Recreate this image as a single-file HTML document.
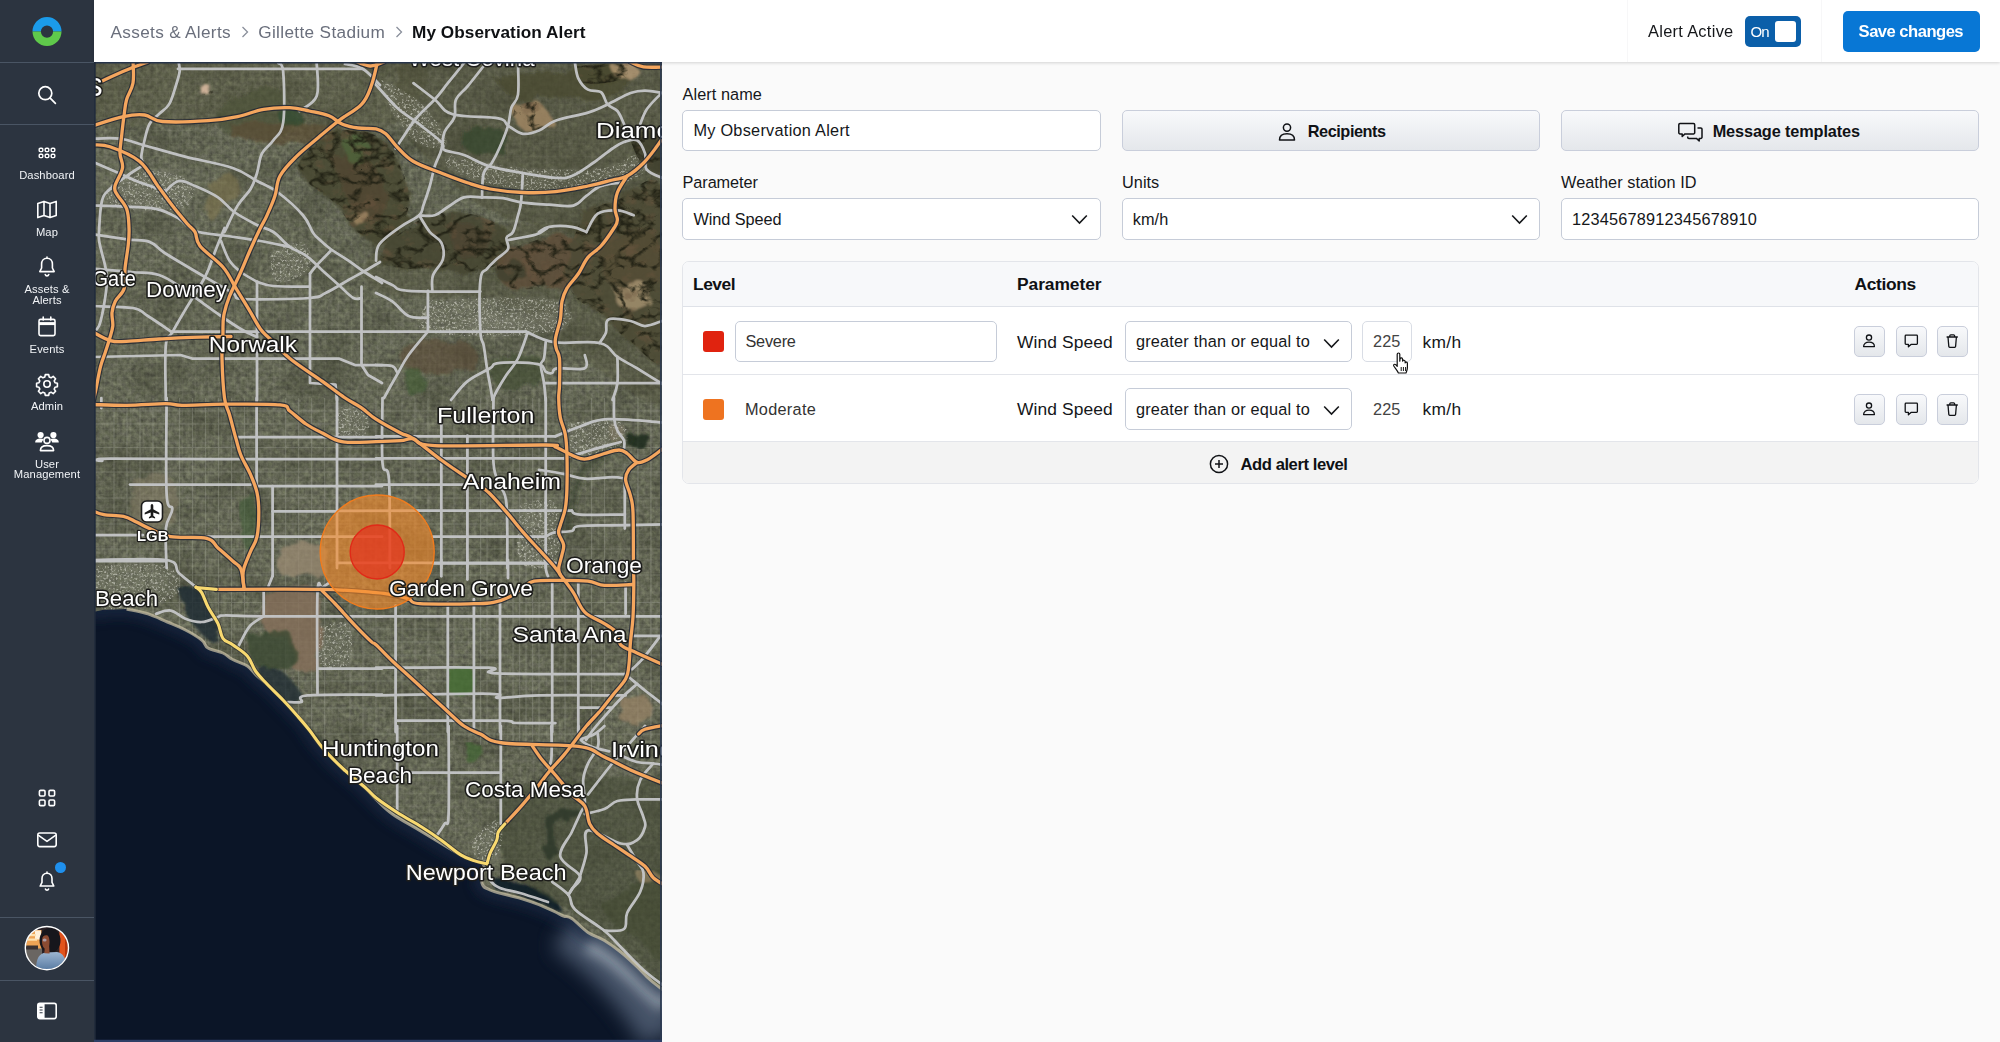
<!DOCTYPE html>
<html lang="en">
<head>
<meta charset="utf-8">
<title>My Observation Alert</title>
<style>
*{box-sizing:border-box;margin:0;padding:0}
html,body{width:2000px;height:1042px;overflow:hidden;background:#fafafa}
body{font-family:"Liberation Sans",Arial,sans-serif;color:#15171a;position:relative;-webkit-font-smoothing:antialiased}
.abs{position:absolute}
#sidebar{position:absolute;left:0;top:0;width:94px;height:1042px;background:#2c3440}
#sidebar .div{position:absolute;left:0;width:94px;height:1px;background:#4a5564}
#sidebar svg{position:absolute;overflow:visible}
.nl{position:absolute;left:0;width:94px;text-align:center;color:#f2f4f7;font-size:11.2px;line-height:11px;letter-spacing:.1px;white-space:nowrap}
#header{position:absolute;left:94px;top:0;width:1906px;height:62px;background:#fff;box-shadow:0 1px 3px rgba(0,0,0,.16)}
.bc{position:absolute;top:0;height:62px;line-height:65px;font-size:17.2px;white-space:nowrap;color:#6a6f7c}
.bc.cur{color:#0f1114;font-weight:700}
#panel{position:absolute;left:662px;top:63px;width:1338px;height:979px;background:#fafafa}
.lbl{position:absolute;font-size:16.3px;line-height:20px;white-space:nowrap;color:#15171a;letter-spacing:.1px}
.inp{position:absolute;background:#fff;border:1.3px solid #c6ccd8;border-radius:5px;font-size:16.3px;line-height:20px;white-space:nowrap;color:#15171a}
.inp span{position:absolute;left:10px;top:9.5px;letter-spacing:.15px}
.btn{position:absolute;border:1.3px solid #c9cedb;border-radius:5px;background:linear-gradient(#f8f9fb,#e4e7eb);font-weight:700;font-size:16.3px;white-space:nowrap;color:#101216}
.chev{position:absolute}
#tbl{position:absolute;left:682px;top:261px;width:1297px;height:223px;border:1.3px solid #e3e5ea;border-radius:7px;background:#fff;overflow:hidden}
#tbl .th{position:absolute;left:0;top:0;width:100%;height:45px;background:#f7f8fa;border-bottom:1.3px solid #dfe2e8}
#tbl .r1{position:absolute;left:0;top:45px;width:100%;height:67.5px;border-bottom:1.3px solid #e3e5ea}
#tbl .r2{position:absolute;left:0;top:112.5px;width:100%;height:67.5px;border-bottom:1.3px solid #e3e5ea}
#tbl .tf{position:absolute;left:0;top:180px;width:100%;height:43px;background:#f3f3f3}
.h{position:absolute;font-weight:700;font-size:17.4px;line-height:20px;white-space:nowrap;color:#0f1114}
.t{position:absolute;font-size:17.4px;line-height:20px;white-space:nowrap;color:#15171a;letter-spacing:.2px}
.sw{position:absolute;width:21px;height:21px;border-radius:3px}
.ib{position:absolute;width:31px;height:31px;border:1.3px solid #c9cedb;border-radius:5px;background:linear-gradient(#f8f9fb,#e4e7eb)}
.ib svg{position:absolute;left:0;top:0}
#map{position:absolute;left:94px;top:62px;width:568px;height:980px;overflow:hidden;background:#5a5d4c}
#map svg{display:block}
</style>
</head>
<body>
<div id="map">
<svg width="568" height="980" viewBox="94 62 568 980" font-family="'Liberation Sans',Arial,sans-serif">
<defs>
<filter id="land" x="0" y="0" width="100%" height="100%" color-interpolation-filters="sRGB"><feTurbulence type="fractalNoise" baseFrequency="0.22" numOctaves="3" seed="3"/><feColorMatrix type="matrix" values="0.24 0.06 0 0 0.235  0.24 0.08 0 0 0.237  0.21 0.02 0 0 0.212  0 0 0 0 1"/></filter>
<filter id="lowvar" x="0" y="0" width="100%" height="100%" color-interpolation-filters="sRGB"><feTurbulence type="fractalNoise" baseFrequency="0.02 0.025" numOctaves="3" seed="11"/><feColorMatrix type="matrix" values="0 0 0 0 0.18  0 0 0 0 0.19  0 0 0 0 0.13  0.9 0 0 0 -0.42"/></filter>
<filter id="bright" x="0" y="0" width="100%" height="100%" color-interpolation-filters="sRGB"><feTurbulence type="fractalNoise" baseFrequency="0.05 0.06" numOctaves="4" seed="23"/><feColorMatrix type="matrix" values="0 0 0 0 0.74  0 0 0 0 0.74  0 0 0 0 0.68  0 2.4 0 0 -1.42"/></filter>
<filter id="ridges" x="0" y="0" width="100%" height="100%" color-interpolation-filters="sRGB"><feTurbulence type="turbulence" baseFrequency="0.045 0.06" numOctaves="3" seed="8"/><feColorMatrix type="matrix" values="0 0 0 0 0.13  0 0 0 0 0.13  0 0 0 0 0.08  -4.5 0 0 0 1.25"/></filter>
<filter id="ridges2" x="0" y="0" width="100%" height="100%" color-interpolation-filters="sRGB"><feTurbulence type="turbulence" baseFrequency="0.05 0.07" numOctaves="3" seed="19"/><feColorMatrix type="matrix" values="0 0 0 0 0.43  0 0 0 0 0.34  0 0 0 0 0.25  0 3.0 0 0 -1.05"/></filter>
<filter id="speck" x="0" y="0" width="100%" height="100%" color-interpolation-filters="sRGB"><feTurbulence type="fractalNoise" baseFrequency="0.45" numOctaves="2" seed="31"/><feColorMatrix type="matrix" values="0 0 0 0 0.86  0 0 0 0 0.86  0 0 0 0 0.82  0 0 4.0 0 -2.05"/></filter>
<filter id="b3" x="-20%" y="-20%" width="140%" height="140%"><feGaussianBlur stdDeviation="3"/></filter>
<filter id="b6" x="-30%" y="-30%" width="160%" height="160%"><feGaussianBlur stdDeviation="6"/></filter>
<filter id="b10" x="-30%" y="-30%" width="160%" height="160%"><feGaussianBlur stdDeviation="10"/></filter>
<filter id="rough" x="-10%" y="-10%" width="120%" height="120%"><feTurbulence type="fractalNoise" baseFrequency="0.06" numOctaves="3" seed="2" result="t"/><feDisplacementMap in="SourceGraphic" in2="t" scale="14"/><feGaussianBlur stdDeviation="1.2"/></filter>
<pattern id="streets" width="6.5" height="6.5" patternUnits="userSpaceOnUse"><path d="M0 .5 H6.5 M.5 0 V6.5" stroke="#c8c8b8" stroke-width=".6" opacity=".10"/></pattern>
<clipPath id="landclip"><path d="M90 58 L668 58 L668 1000 L668.0 994.0 L650.0 979.7 L637.0 966.6 L620.7 952.0 L604.4 940.5 L588.0 932.4 L571.8 918.5 L563.6 916.0 L555.4 912.0 L539.0 904.6 L522.8 899.0 L506.5 894.8 L490.0 890.0 L482.0 883.4 L484.0 866.0 L477.0 861.4 L460.8 854.9 L441.3 843.5 L416.8 828.8 L392.3 814.0 L376.0 799.4 L363.0 786.0 L340.0 766.0 L320.0 745.0 L306.0 724.8 L294.6 711.7 L283.2 700.0 L270.2 687.0 L257.0 675.8 L247.3 666.0 L232.7 659.5 L222.9 653.0 L208.0 648.0 L201.7 640.0 L185.4 630.0 L167.4 622.0 L147.8 613.8 L126.6 609.0 L103.8 609.8 L90.0 612.5 Z"/></clipPath>
</defs>
<rect x="94" y="62" width="568" height="980" fill="#0b1527"/>
<path d="M566 930 L590 948 L612 968 L632 990 L650 1014 L662 1036" fill="none" stroke="#56657a" stroke-width="44" opacity=".8" filter="url(#b10)"/>
<path d="M590 940 L606 948 L622 960 L640 976 L652 988 L668 1002" fill="none" stroke="#a3adb8" stroke-width="24" opacity=".85" filter="url(#b6)"/>
<path d="M90.0 612.5 C92.5 612.0 97.2 610.4 103.8 609.8 C110.4 609.2 118.7 608.3 126.6 609.0 C134.5 609.7 140.5 611.5 147.8 613.8 C155.1 616.1 160.6 619.1 167.4 622.0 C174.2 624.9 179.2 626.8 185.4 630.0 C191.6 633.2 197.6 636.8 201.7 640.0 C205.8 643.2 204.2 645.7 208.0 648.0 C211.8 650.3 218.5 650.9 222.9 653.0 C227.3 655.1 228.3 657.2 232.7 659.5 C237.1 661.8 242.9 663.1 247.3 666.0 C251.7 668.9 252.9 672.0 257.0 675.8 C261.1 679.6 265.5 682.6 270.2 687.0 C274.9 691.4 278.8 695.6 283.2 700.0 C287.6 704.4 290.5 707.2 294.6 711.7 C298.7 716.2 301.4 718.8 306.0 724.8 C310.6 730.8 313.9 737.6 320.0 745.0 C326.1 752.4 332.3 758.6 340.0 766.0 C347.7 773.4 356.5 780.0 363.0 786.0 C369.5 792.0 370.7 794.4 376.0 799.4 C381.3 804.4 385.0 808.7 392.3 814.0 C399.6 819.3 408.0 823.5 416.8 828.8 C425.6 834.1 433.4 838.8 441.3 843.5 C449.2 848.2 454.4 851.7 460.8 854.9 C467.2 858.1 472.8 859.4 477.0 861.4 C481.2 863.4 483.1 862.0 484.0 866.0 C484.9 870.0 480.9 879.1 482.0 883.4 C483.1 887.7 485.6 887.9 490.0 890.0 C494.4 892.1 500.6 893.2 506.5 894.8 C512.4 896.4 516.9 897.2 522.8 899.0 C528.6 900.8 533.1 902.3 539.0 904.6 C544.9 906.9 551.0 909.9 555.4 912.0 C559.8 914.1 560.6 914.8 563.6 916.0 C566.6 917.2 567.4 915.5 571.8 918.5 C576.2 921.5 582.1 928.4 588.0 932.4 C593.9 936.4 598.5 937.0 604.4 940.5 C610.3 944.0 614.8 947.3 620.7 952.0 C626.6 956.7 631.7 961.6 637.0 966.6 C642.3 971.6 644.4 974.8 650.0 979.7 C655.6 984.6 664.8 991.4 668.0 994.0" fill="none" stroke="#1a2b45" stroke-width="16" opacity=".7" filter="url(#b6)"/>
<g clip-path="url(#landclip)">
<rect x="94" y="62" width="568" height="980" filter="url(#land)"/>
<rect x="94" y="62" width="568" height="980" fill="url(#streets)"/>
<rect x="94" y="62" width="568" height="980" filter="url(#lowvar)"/>
<rect x="94" y="62" width="568" height="980" filter="url(#bright)" opacity=".10"/>
<g fill="none" stroke="#a9aba0" stroke-width="1.1" stroke-linejoin="round" opacity=".30">
<path d="M94.0 411.0 L662.0 411.0"/>
<path d="M94.0 424.0 L662.0 424.0"/>
<path d="M94.0 447.5 L662.0 447.5"/>
<path d="M94.0 472.0 L662.0 472.0"/>
<path d="M94.0 498.0 L662.0 498.0"/>
<path d="M94.0 524.0 L662.0 524.0"/>
<path d="M94.0 549.0 L662.0 549.0"/>
<path d="M94.0 575.0 L662.0 575.0"/>
<path d="M94.0 602.5 L662.0 602.5"/>
<path d="M94.0 629.0 L662.0 629.0"/>
<path d="M94.0 642.0 L662.0 642.0"/>
<path d="M94.0 655.0 L662.0 655.0"/>
<path d="M94.0 681.0 L662.0 681.0"/>
<path d="M94.0 708.0 L662.0 708.0"/>
<path d="M94.0 734.0 L662.0 734.0"/>
<path d="M114.0 398.0 L114.0 745.0"/>
<path d="M127.0 398.0 L127.0 745.0"/>
<path d="M140.0 398.0 L140.0 745.0"/>
<path d="M153.0 398.0 L153.0 745.0"/>
<path d="M179.5 398.0 L179.5 745.0"/>
<path d="M192.5 398.0 L192.5 745.0"/>
<path d="M205.5 398.0 L205.5 745.0"/>
<path d="M218.5 398.0 L218.5 745.0"/>
<path d="M231.5 398.0 L231.5 745.0"/>
<path d="M244.5 398.0 L244.5 745.0"/>
<path d="M285.5 398.0 L285.5 745.0"/>
<path d="M298.5 398.0 L298.5 745.0"/>
<path d="M311.5 398.0 L311.5 745.0"/>
<path d="M324.5 398.0 L324.5 745.0"/>
<path d="M350.0 398.0 L350.0 745.0"/>
<path d="M363.0 398.0 L363.0 745.0"/>
<path d="M376.0 398.0 L376.0 745.0"/>
<path d="M402.0 398.0 L402.0 745.0"/>
<path d="M415.0 398.0 L415.0 745.0"/>
<path d="M428.0 398.0 L428.0 745.0"/>
<path d="M454.0 398.0 L454.0 745.0"/>
<path d="M480.5 398.0 L480.5 745.0"/>
<path d="M487.0 398.0 L487.0 745.0"/>
<path d="M513.0 398.0 L513.0 745.0"/>
<path d="M519.5 398.0 L519.5 745.0"/>
<path d="M526.0 398.0 L526.0 745.0"/>
<path d="M532.5 398.0 L532.5 745.0"/>
<path d="M539.0 398.0 L539.0 745.0"/>
<path d="M565.0 398.0 L565.0 745.0"/>
<path d="M591.5 398.0 L591.5 745.0"/>
<path d="M604.5 398.0 L604.5 745.0"/>
<path d="M638.0 398.0 L638.0 745.0"/>
<path d="M651.0 398.0 L651.0 745.0"/>
</g>
<path d="M400.0 55.0 C448.6 55.0 621.4 21.7 670.0 55.0 C718.6 88.3 682.6 207.6 670.0 240.0 C657.4 272.4 630.6 239.5 600.0 235.0 C569.4 230.5 528.8 226.7 500.0 215.0 C471.2 203.3 458.0 187.1 440.0 170.0 C422.0 152.9 407.2 140.7 400.0 120.0 C392.8 99.3 400.0 66.7 400.0 55.0 Z" fill="#4a4830" opacity="0.38" filter="url(#rough)"/>
<path d="M90.0 55.0 C145.8 55.0 344.2 43.3 400.0 55.0 C455.8 66.7 412.6 105.6 400.0 120.0 C387.4 134.4 366.0 134.1 330.0 135.0 C294.0 135.9 243.2 127.7 200.0 125.0 C156.8 122.3 109.8 132.6 90.0 120.0 C70.2 107.4 90.0 66.7 90.0 55.0 Z" fill="#4f5034" opacity="0.28" filter="url(#rough)"/>
<path d="M376.0 228.0 C401.9 227.5 467.4 222.8 520.0 225.0 C572.6 227.2 641.4 208.5 668.0 240.0 C694.6 271.5 687.4 382.0 668.0 400.0 C648.6 418.0 590.2 358.0 560.0 340.0 C529.8 322.0 533.1 309.0 500.0 300.0 C466.9 291.0 398.3 303.0 376.0 290.0 C353.7 277.0 376.0 239.2 376.0 228.0 Z" fill="#4a4830" opacity="0.3" filter="url(#rough)"/>
<path d="M113.6 177.5 C121.8 176.3 145.2 169.8 159.3 170.9 C173.3 172.1 187.2 177.5 191.9 184.0 C196.6 190.4 195.9 202.1 185.4 206.8 C174.8 211.5 147.2 211.3 133.2 210.1 C119.1 208.9 110.6 206.2 107.1 200.3 C103.5 194.4 112.4 181.6 113.6 177.5 Z" fill="#7c7d6e" opacity="0.35" filter="url(#rough)"/>
<path d="M381.1 79.6 C388.2 83.7 408.5 91.3 420.3 102.4 C432.0 113.6 446.4 133.9 446.4 141.6 C446.4 149.2 429.7 149.5 420.3 144.8 C410.9 140.1 401.2 127.2 394.2 115.5 C387.1 103.7 383.5 86.0 381.1 79.6 Z" fill="#7c7d6e" opacity="0.3" filter="url(#rough)"/>
<path d="M446.4 154.6 C459.3 157.0 490.0 165.3 518.1 167.7 C546.3 170.0 580.7 170.6 603.0 167.7 C625.3 164.7 634.5 150.8 642.1 151.4 C649.8 151.9 652.4 164.5 645.4 170.9 C638.3 177.4 625.9 184.0 603.0 187.2 C580.1 190.5 545.2 191.8 518.1 188.9 C491.1 185.9 465.8 177.1 452.9 170.9 C440.0 164.8 447.5 157.6 446.4 154.6 Z" fill="#7c7d6e" opacity="0.3" filter="url(#rough)"/>
<path d="M270.2 252.5 C276.1 250.7 295.8 239.8 302.8 242.7 C309.9 245.6 314.0 261.8 309.3 268.8 C304.6 275.9 283.8 284.8 276.7 281.9 C269.7 278.9 271.4 257.8 270.2 252.5 Z" fill="#7c7d6e" opacity="0.3" filter="url(#rough)"/>
<path d="M472.5 314.5 C486.6 314.5 536.7 311.5 550.8 314.5 C564.9 317.4 564.9 327.9 550.8 330.8 C536.7 333.7 486.6 333.7 472.5 330.8 C458.4 327.9 472.5 317.4 472.5 314.5 Z" fill="#7c7d6e" opacity="0.3" filter="url(#rough)"/>
<path d="M280.0 547.0 C287.6 546.6 314.3 541.2 322.0 545.0 C329.7 548.8 324.8 562.4 323.0 568.0 C321.2 573.6 319.6 574.9 312.0 576.0 C304.4 577.1 286.8 579.2 281.0 574.0 C275.2 568.8 280.2 551.9 280.0 547.0 Z" fill="#9a8a72" opacity="0.75" filter="url(#rough)"/>
<path d="M265.0 593.0 C274.2 593.0 306.6 579.7 316.0 593.0 C325.4 606.3 321.3 653.5 317.0 667.0 C312.7 680.5 296.9 672.9 292.0 668.0 C287.1 663.1 294.7 646.8 290.0 640.0 C285.3 633.2 270.5 638.5 266.0 630.0 C261.5 621.5 265.2 599.7 265.0 593.0 Z" fill="#86705a" opacity="0.8" filter="url(#rough)"/>
<path d="M249.0 634.0 C256.4 633.8 282.3 627.6 290.0 633.0 C297.7 638.4 297.0 657.7 292.0 664.0 C287.0 670.3 269.6 669.6 262.0 668.0 C254.4 666.4 252.3 661.1 250.0 655.0 C247.7 648.9 249.2 637.8 249.0 634.0 Z" fill="#3a4a32" opacity="0.8" filter="url(#rough)"/>
<path d="M449.4 669.3 C453.5 669.3 468.1 665.2 472.2 669.3 C476.3 673.4 476.3 687.9 472.2 692.0 C468.1 696.1 453.5 696.1 449.4 692.0 C445.3 687.9 449.4 673.4 449.4 669.3 Z" fill="#466e36" opacity="0.85" filter="url(#rough)"/>
<path d="M620.7 698.0 C625.4 697.8 641.9 692.8 646.8 697.0 C651.7 701.2 652.5 717.0 648.0 721.5 C643.5 726.0 626.9 726.2 622.0 722.0 C617.1 717.8 620.9 702.3 620.7 698.0 Z" fill="#9a8466" opacity="0.7" filter="url(#rough)"/>
<path d="M241.0 496.0 C243.7 496.0 252.9 487.2 256.0 496.0 C259.1 504.8 260.3 536.2 258.0 545.0 C255.7 553.8 246.1 553.8 243.0 545.0 C239.9 536.2 241.4 504.8 241.0 496.0 Z" fill="#3e5a34" opacity="0.55" filter="url(#rough)"/>
<path d="M133.0 478.0 C139.7 478.0 163.0 470.4 170.0 478.0 C177.0 485.6 178.3 512.1 172.0 520.0 C165.7 527.9 142.0 529.6 135.0 522.0 C128.0 514.4 133.4 485.9 133.0 478.0 Z" fill="#8a8068" opacity="0.45" filter="url(#rough)"/>
<path d="M467.4 745.6 C469.7 745.6 478.1 742.6 480.4 745.6 C482.7 748.6 482.7 759.0 480.4 762.0 C478.1 765.0 469.7 765.0 467.4 762.0 C465.1 759.0 467.4 748.6 467.4 745.6 Z" fill="#3f6a30" opacity="0.6" filter="url(#rough)"/>
<path d="M626.0 436.0 C628.5 435.3 635.3 431.3 640.0 432.0 C644.7 432.7 652.0 437.3 652.0 440.0 C652.0 442.7 644.3 446.1 640.0 447.0 C635.7 447.9 630.5 447.0 628.0 445.0 C625.5 443.0 626.4 437.6 626.0 436.0 Z" fill="#1e2a1c" opacity="0.85" filter="url(#rough)"/>
<path d="M610.0 425.0 C612.2 424.8 619.8 421.3 622.0 424.0 C624.2 426.7 624.0 436.9 622.0 440.0 C620.0 443.1 613.2 443.7 611.0 441.0 C608.8 438.3 610.2 427.9 610.0 425.0 Z" fill="#8b7d63" opacity="0.5" filter="url(#rough)"/>
<path d="M178.8 589.0 C182.6 589.5 194.4 588.2 200.0 592.0 C205.6 595.8 206.8 603.2 210.0 610.0 C213.2 616.8 217.3 624.6 218.0 630.0 C218.7 635.4 217.2 639.6 214.0 640.0 C210.8 640.4 205.0 637.0 200.0 632.0 C195.0 627.0 189.8 619.7 186.0 612.0 C182.2 604.3 180.1 593.1 178.8 589.0 Z" fill="#1b2a33" opacity="0.8" filter="url(#rough)"/>
<path d="M257.0 668.0 C261.1 668.4 272.6 666.0 280.0 670.0 C287.4 674.0 294.8 684.1 298.0 690.0 C301.2 695.9 301.2 701.2 298.0 703.0 C294.8 704.8 286.5 703.4 280.0 700.0 C273.5 696.6 266.1 689.8 262.0 684.0 C257.9 678.2 257.9 670.9 257.0 668.0 Z" fill="#1d2c30" opacity="0.75" filter="url(#rough)"/>
<path d="M545.7 815.7 C547.6 815.0 550.2 813.2 556.0 812.0 C561.8 810.8 574.0 808.1 578.0 809.0 C582.0 809.9 581.6 814.7 578.0 817.0 C574.4 819.3 562.1 817.9 558.0 822.0 C553.9 826.1 556.5 833.8 555.4 840.0 C554.3 846.2 553.9 853.6 552.0 856.5 C550.1 859.4 545.7 859.7 545.0 856.0 C544.3 852.3 547.9 843.3 548.0 836.0 C548.1 828.7 546.1 819.4 545.7 815.7 Z" fill="#1c2a22" opacity="0.85" filter="url(#rough)"/>
<path d="M490.0 876.0 C492.9 876.7 499.9 878.4 506.0 880.0 C512.1 881.6 516.4 882.3 524.0 885.0 C531.6 887.7 541.5 891.2 548.0 895.0 C554.5 898.8 557.3 902.6 560.0 906.0 C562.7 909.4 565.7 914.2 563.0 914.0 C560.3 913.8 552.7 908.2 545.0 905.0 C537.3 901.8 528.8 898.9 520.0 896.0 C511.2 893.1 501.4 892.6 496.0 889.0 C490.6 885.4 491.1 878.3 490.0 876.0 Z" fill="#101c28" opacity="0.9" filter="url(#rough)"/>
<path d="M310.0 728.0 C313.6 731.6 324.6 741.9 330.0 748.0 C335.4 754.1 339.6 759.1 340.0 762.0 C340.4 764.9 336.0 766.5 332.0 764.0 C328.0 761.5 322.0 754.5 318.0 748.0 C314.0 741.5 311.4 731.6 310.0 728.0 Z" fill="#2a3326" opacity="0.6" filter="url(#rough)"/>
<path d="M600.0 905.0 C607.2 900.5 628.5 885.9 640.0 880.0 C651.5 874.1 659.7 857.6 664.0 872.0 C668.3 886.4 668.3 947.8 664.0 960.0 C659.7 972.2 648.8 946.3 640.0 940.0 C631.2 933.7 622.2 931.3 615.0 925.0 C607.8 918.7 602.7 908.6 600.0 905.0 Z" fill="#3f4a2c" opacity="0.5" filter="url(#rough)"/>
<path d="M500.0 800.0 C510.8 796.4 534.8 783.6 560.0 780.0 C585.2 776.4 620.6 778.2 640.0 780.0 C659.4 781.8 663.0 752.2 668.0 790.0 C673.0 827.8 673.0 959.4 668.0 990.0 C663.0 1020.6 652.2 970.8 640.0 960.0 C627.8 949.2 614.4 939.9 600.0 930.0 C585.6 920.1 574.4 914.0 560.0 905.0 C545.6 896.0 530.8 889.9 520.0 880.0 C509.2 870.1 503.6 864.4 500.0 850.0 C496.4 835.6 500.0 809.0 500.0 800.0 Z" fill="#3f4630" opacity="0.5" filter="url(#rough)"/>
<path d="M636.0 872.0 C639.6 872.0 651.7 870.6 656.0 872.0 C660.3 873.4 662.9 878.2 660.0 880.0 C657.1 881.8 644.3 883.4 640.0 882.0 C635.7 880.6 636.7 873.8 636.0 872.0 Z" fill="#a08a66" opacity="0.6" filter="url(#rough)"/>
<path d="M337.0 408.0 C342.0 408.0 359.8 403.3 365.0 408.0 C370.2 412.7 370.9 429.3 366.0 434.0 C361.1 438.7 343.2 438.7 338.0 434.0 C332.8 429.3 337.2 412.7 337.0 408.0 Z" fill="#7c7d6e" opacity="0.3" filter="url(#rough)"/>
<path d="M568.5 422.5 C577.9 422.5 611.3 417.2 620.7 422.5 C630.1 427.8 630.1 446.5 620.7 451.8 C611.3 457.1 577.9 457.1 568.5 451.8 C559.1 446.5 568.5 427.8 568.5 422.5 Z" fill="#7c7d6e" opacity="0.3" filter="url(#rough)"/>
<path d="M519.6 504.0 C526.0 504.0 549.0 493.7 555.4 504.0 C561.8 514.3 561.8 550.7 555.4 561.0 C549.0 571.3 526.0 571.3 519.6 561.0 C513.2 550.7 519.6 514.3 519.6 504.0 Z" fill="#7c7d6e" opacity="0.3" filter="url(#rough)"/>
<path d="M320.8 625.0 C325.8 625.0 343.5 618.0 348.5 625.0 C353.5 632.0 353.5 657.0 348.5 664.0 C343.5 671.0 325.8 671.0 320.8 664.0 C315.8 657.0 320.8 632.0 320.8 625.0 Z" fill="#7c7d6e" opacity="0.3" filter="url(#rough)"/>
<path d="M428.0 300.0 C450.9 300.0 532.1 294.2 555.0 300.0 C577.9 305.8 577.9 326.2 555.0 332.0 C532.1 337.8 450.9 337.8 428.0 332.0 C405.1 326.2 428.0 305.8 428.0 300.0 Z" fill="#7c7d6e" opacity="0.3" filter="url(#rough)"/>
<path d="M470.0 840.0 C475.0 836.4 492.6 818.2 498.0 820.0 C503.4 821.8 503.2 842.4 500.0 850.0 C496.8 857.6 485.4 863.8 480.0 862.0 C474.6 860.2 471.8 844.0 470.0 840.0 Z" fill="#7c7d6e" opacity="0.3" filter="url(#rough)"/>
<path d="M96.0 566.0 C108.4 566.0 149.9 561.7 165.0 566.0 C180.1 570.3 182.7 582.8 180.0 590.0 C177.3 597.2 165.1 603.1 150.0 606.0 C134.9 608.9 105.7 613.2 96.0 606.0 C86.3 598.8 96.0 573.2 96.0 566.0 Z" fill="#7c7d6e" opacity="0.3" filter="url(#rough)"/>
<clipPath id="indclip">
<path d="M113.6 177.5 C121.8 176.3 145.2 169.8 159.3 170.9 C173.3 172.1 187.2 177.5 191.9 184.0 C196.6 190.4 195.9 202.1 185.4 206.8 C174.8 211.5 147.2 211.3 133.2 210.1 C119.1 208.9 110.6 206.2 107.1 200.3 C103.5 194.4 112.4 181.6 113.6 177.5 Z"/>
<path d="M381.1 79.6 C388.2 83.7 408.5 91.3 420.3 102.4 C432.0 113.6 446.4 133.9 446.4 141.6 C446.4 149.2 429.7 149.5 420.3 144.8 C410.9 140.1 401.2 127.2 394.2 115.5 C387.1 103.7 383.5 86.0 381.1 79.6 Z"/>
<path d="M446.4 154.6 C459.3 157.0 490.0 165.3 518.1 167.7 C546.3 170.0 580.7 170.6 603.0 167.7 C625.3 164.7 634.5 150.8 642.1 151.4 C649.8 151.9 652.4 164.5 645.4 170.9 C638.3 177.4 625.9 184.0 603.0 187.2 C580.1 190.5 545.2 191.8 518.1 188.9 C491.1 185.9 465.8 177.1 452.9 170.9 C440.0 164.8 447.5 157.6 446.4 154.6 Z"/>
<path d="M270.2 252.5 C276.1 250.7 295.8 239.8 302.8 242.7 C309.9 245.6 314.0 261.8 309.3 268.8 C304.6 275.9 283.8 284.8 276.7 281.9 C269.7 278.9 271.4 257.8 270.2 252.5 Z"/>
<path d="M472.5 314.5 C486.6 314.5 536.7 311.5 550.8 314.5 C564.9 317.4 564.9 327.9 550.8 330.8 C536.7 333.7 486.6 333.7 472.5 330.8 C458.4 327.9 472.5 317.4 472.5 314.5 Z"/>
<path d="M337.0 408.0 C342.0 408.0 359.8 403.3 365.0 408.0 C370.2 412.7 370.9 429.3 366.0 434.0 C361.1 438.7 343.2 438.7 338.0 434.0 C332.8 429.3 337.2 412.7 337.0 408.0 Z"/>
<path d="M568.5 422.5 C577.9 422.5 611.3 417.2 620.7 422.5 C630.1 427.8 630.1 446.5 620.7 451.8 C611.3 457.1 577.9 457.1 568.5 451.8 C559.1 446.5 568.5 427.8 568.5 422.5 Z"/>
<path d="M519.6 504.0 C526.0 504.0 549.0 493.7 555.4 504.0 C561.8 514.3 561.8 550.7 555.4 561.0 C549.0 571.3 526.0 571.3 519.6 561.0 C513.2 550.7 519.6 514.3 519.6 504.0 Z"/>
<path d="M320.8 625.0 C325.8 625.0 343.5 618.0 348.5 625.0 C353.5 632.0 353.5 657.0 348.5 664.0 C343.5 671.0 325.8 671.0 320.8 664.0 C315.8 657.0 320.8 632.0 320.8 625.0 Z"/>
<path d="M428.0 300.0 C450.9 300.0 532.1 294.2 555.0 300.0 C577.9 305.8 577.9 326.2 555.0 332.0 C532.1 337.8 450.9 337.8 428.0 332.0 C405.1 326.2 428.0 305.8 428.0 300.0 Z"/>
<path d="M470.0 840.0 C475.0 836.4 492.6 818.2 498.0 820.0 C503.4 821.8 503.2 842.4 500.0 850.0 C496.8 857.6 485.4 863.8 480.0 862.0 C474.6 860.2 471.8 844.0 470.0 840.0 Z"/>
<path d="M96.0 566.0 C108.4 566.0 149.9 561.7 165.0 566.0 C180.1 570.3 182.7 582.8 180.0 590.0 C177.3 597.2 165.1 603.1 150.0 606.0 C134.9 608.9 105.7 613.2 96.0 606.0 C86.3 598.8 96.0 573.2 96.0 566.0 Z"/>
</clipPath>
<g clip-path="url(#indclip)"><rect x="94" y="62" width="568" height="980" filter="url(#speck)" opacity=".6"/></g>
<g filter="url(#rough)">
<path d="M296.3 167.7 C300.4 162.4 308.6 145.1 319.1 138.3 C329.7 131.5 343.3 129.6 355.0 130.1 C366.8 130.7 376.2 134.8 384.4 141.6 C392.6 148.3 396.3 157.7 400.7 167.7 C405.1 177.7 408.6 186.5 408.8 197.0 C409.1 207.6 407.3 217.9 402.3 226.4 C397.3 234.9 389.6 243.8 381.1 244.3 C372.6 244.9 363.2 237.0 355.0 229.7 C346.8 222.3 343.7 211.8 335.4 203.6 C327.2 195.3 316.4 190.4 309.3 184.0 C302.3 177.5 298.6 170.6 296.3 167.7 Z" fill="#47452f" opacity="0.82"/>
<path d="M328.9 157.9 C333.6 156.7 346.8 149.6 355.0 151.4 C363.2 153.1 368.7 159.4 374.6 167.7 C380.5 175.9 387.6 187.0 387.6 197.0 C387.6 207.0 380.5 220.2 374.6 223.1 C368.7 226.1 360.9 220.4 355.0 213.3 C349.1 206.3 346.7 194.0 342.0 184.0 C337.3 174.0 331.3 162.6 328.9 157.9 Z" fill="#54452f" opacity="0.55"/>
<path d="M342.0 141.6 C346.1 141.0 360.7 135.4 364.8 138.3 C368.9 141.2 367.7 153.8 364.8 157.9 C361.9 162.0 352.6 164.1 348.5 161.1 C344.4 158.2 343.1 145.1 342.0 141.6 Z" fill="#4f6a3c" opacity="0.7"/>
<path d="M351.7 213.3 C354.1 212.8 361.9 208.9 364.8 210.1 C367.7 211.3 369.8 217.5 368.1 219.9 C366.3 222.2 357.9 224.3 355.0 223.1 C352.1 222.0 352.3 215.1 351.7 213.3 Z" fill="#a58a66" opacity="0.8"/>
<path d="M387.6 242.7 C394.7 238.0 412.7 221.9 426.8 216.6 C440.9 211.3 451.8 211.0 465.9 213.3 C480.0 215.7 498.0 222.0 505.1 229.7 C512.1 237.3 509.8 248.1 505.1 255.8 C500.4 263.4 490.7 269.7 479.0 272.1 C467.2 274.4 452.8 269.4 439.8 268.8 C426.9 268.2 417.8 270.0 407.2 268.8 C396.6 267.6 384.6 267.0 381.1 262.3 C377.6 257.6 386.5 246.2 387.6 242.7 Z" fill="#434330" opacity="0.82"/>
<path d="M446.4 223.1 C453.4 224.3 477.3 225.0 485.5 229.7 C493.7 234.4 496.7 244.5 492.0 249.2 C487.3 253.9 467.6 260.5 459.4 255.8 C451.2 251.1 448.7 229.0 446.4 223.1 Z" fill="#4f4431" opacity="0.5"/>
<path d="M495.3 255.8 C501.2 253.4 515.6 246.2 527.9 242.7 C540.3 239.2 552.7 233.8 563.8 236.2 C575.0 238.5 587.6 247.5 589.9 255.8 C592.3 264.0 585.1 276.0 576.9 281.9 C568.6 287.7 557.2 287.8 544.2 288.4 C531.3 289.0 513.9 291.0 505.1 285.1 C496.3 279.2 497.1 261.0 495.3 255.8 Z" fill="#5f4e38" opacity="0.8"/>
<path d="M495.3 268.8 C499.4 267.6 512.3 261.1 518.1 262.3 C524.0 263.5 530.9 271.8 527.9 275.3 C525.0 278.9 507.7 283.0 501.8 281.9 C496.0 280.7 496.5 271.2 495.3 268.8 Z" fill="#3d3e2c" opacity="0.7"/>
<path d="M583.4 213.3 C589.3 211.0 601.5 204.4 616.0 200.3 C630.5 196.2 654.6 162.9 664.0 190.5 C673.4 218.1 674.5 326.6 668.2 353.6 C661.9 380.7 640.8 347.6 629.1 340.6 C617.3 333.5 613.0 322.7 603.0 314.5 C593.0 306.3 580.1 304.3 573.6 294.9 C567.1 285.5 565.3 277.0 567.1 262.3 C568.8 247.6 580.5 222.2 583.4 213.3 Z" fill="#4d4a35" opacity="0.82"/>
<path d="M603.0 242.7 C611.2 240.4 637.5 225.0 648.6 229.7 C659.8 234.4 668.5 258.2 665.0 268.8 C661.4 279.4 640.2 287.2 629.1 288.4 C617.9 289.6 607.7 283.6 603.0 275.3 C598.3 267.1 603.0 248.6 603.0 242.7 Z" fill="#5a4a35" opacity="0.5"/>
<path d="M612.8 288.4 C618.0 287.2 635.7 279.5 642.1 281.9 C648.6 284.2 652.2 296.7 648.6 301.4 C645.1 306.1 629.0 310.3 622.5 308.0 C616.1 305.6 614.5 291.9 612.8 288.4 Z" fill="#a89372" opacity="0.8"/>
<path d="M629.1 138.3 C636.1 136.0 661.2 120.0 668.2 125.3 C675.3 130.5 672.3 160.0 668.2 167.7 C664.1 175.3 652.4 173.0 645.4 167.7 C638.3 162.4 632.0 143.6 629.1 138.3 Z" fill="#3e3f2d" opacity="0.8"/>
<path d="M514.9 105.7 C519.0 105.1 531.3 100.1 537.7 102.4 C544.2 104.8 551.4 113.7 550.8 118.7 C550.2 123.7 540.9 129.6 534.5 130.1 C528.0 130.7 518.4 126.4 514.9 122.0 C511.4 117.6 514.9 108.6 514.9 105.7 Z" fill="#a08663" opacity="0.85"/>
<path d="M495.3 79.6 C505.3 78.4 531.4 75.4 550.8 73.1 C570.2 70.7 588.9 65.4 603.0 66.5 C617.1 67.7 629.1 73.7 629.1 79.6 C629.1 85.4 615.9 96.2 603.0 99.2 C590.1 102.1 572.6 95.9 557.3 95.9 C542.0 95.9 529.3 102.1 518.1 99.2 C507.0 96.2 499.4 83.1 495.3 79.6 Z" fill="#48492f" opacity="0.7"/>
<path d="M462.7 131.8 C469.7 131.5 494.2 126.6 501.8 130.1 C509.5 133.7 511.0 147.5 505.1 151.4 C499.2 155.2 476.8 154.9 469.2 151.4 C461.6 147.8 463.9 135.3 462.7 131.8 Z" fill="#37452c" opacity="0.75"/>
<path d="M576.9 66.5 C583.9 65.9 608.4 60.9 616.0 63.3 C623.7 65.6 625.2 76.1 619.3 79.6 C613.4 83.1 591.0 85.2 583.4 82.8 C575.8 80.5 578.0 69.5 576.9 66.5 Z" fill="#4a4a30" opacity="0.8"/>
<path d="M612.8 66.5 C616.3 65.9 628.2 61.5 632.3 63.3 C636.4 65.0 638.5 74.0 635.6 76.3 C632.7 78.7 620.1 78.1 616.0 76.3 C611.9 74.6 613.3 68.3 612.8 66.5 Z" fill="#b59a76" opacity="0.8"/>
<path d="M221.2 102.4 C225.4 101.2 234.1 98.2 244.1 95.9 C254.1 93.5 268.5 87.0 276.7 89.4 C284.9 91.7 286.2 102.5 289.8 108.9 C293.3 115.4 299.8 120.0 296.3 125.3 C292.8 130.5 281.9 136.5 270.2 138.3 C258.4 140.1 240.4 138.6 231.0 135.0 C221.6 131.5 219.7 124.6 218.0 118.7 C216.2 112.9 220.7 105.4 221.2 102.4 Z" fill="#4b5238" opacity="0.6"/>
<path d="M231.0 125.3 C236.9 124.7 247.2 122.0 263.7 122.0 C280.1 122.0 310.6 122.3 322.4 125.3 C334.1 128.2 337.1 135.4 328.9 138.3 C320.7 141.2 293.7 141.6 276.7 141.6 C259.7 141.6 242.5 141.2 234.3 138.3 C226.1 135.4 231.6 127.6 231.0 125.3 Z" fill="#5d4a32" opacity="0.55"/>
<path d="M276.7 112.2 C280.2 111.6 291.6 106.6 296.3 108.9 C301.0 111.3 305.2 122.3 302.8 125.3 C300.5 128.2 287.9 127.6 283.2 125.3 C278.5 122.9 277.9 114.6 276.7 112.2 Z" fill="#2f4a2e" opacity="0.7"/>
<path d="M201.7 87.7 C203.4 87.7 209.7 86.6 211.5 87.7 C213.2 88.9 213.2 93.1 211.5 94.3 C209.7 95.4 203.4 95.4 201.7 94.3 C199.9 93.1 201.7 88.9 201.7 87.7 Z" fill="#d8b9a0" opacity="0.9"/>
<path d="M208.2 184.0 C212.3 182.2 225.7 173.0 231.0 174.2 C236.3 175.4 239.9 182.9 237.6 190.5 C235.2 198.1 223.9 212.5 218.0 216.6 C212.1 220.7 206.7 219.2 204.9 213.3 C203.2 207.5 207.6 189.3 208.2 184.0 Z" fill="#7f7450" opacity="0.6"/>
<path d="M404.0 347.1 C410.4 345.9 427.5 340.6 439.8 340.6 C452.2 340.6 467.2 341.8 472.5 347.1 C477.8 352.4 476.3 365.0 469.2 370.0 C462.2 374.9 445.1 375.4 433.3 374.8 C421.6 374.3 409.2 371.7 404.0 366.7 C398.7 361.7 404.0 350.6 404.0 347.1 Z" fill="#5a4c36" opacity="0.6"/>
<path d="M492.0 360.2 C499.7 359.0 526.2 349.5 534.5 353.6 C542.7 357.7 544.2 377.1 537.7 383.0 C531.3 388.9 506.8 390.4 498.6 386.3 C490.3 382.2 493.2 364.9 492.0 360.2 Z" fill="#3a4a2f" opacity="0.6"/>
<path d="M404.0 373.2 C406.9 372.6 416.7 367.0 420.3 370.0 C423.8 372.9 425.9 385.4 423.5 389.5 C421.2 393.6 410.7 395.7 407.2 392.8 C403.7 389.9 404.5 376.7 404.0 373.2 Z" fill="#3f5a34" opacity="0.6"/>
</g>
<clipPath id="hillclip">
<path d="M296.3 167.7 C300.4 162.4 308.6 145.1 319.1 138.3 C329.7 131.5 343.3 129.6 355.0 130.1 C366.8 130.7 376.2 134.8 384.4 141.6 C392.6 148.3 396.3 157.7 400.7 167.7 C405.1 177.7 408.6 186.5 408.8 197.0 C409.1 207.6 407.3 217.9 402.3 226.4 C397.3 234.9 389.6 243.8 381.1 244.3 C372.6 244.9 363.2 237.0 355.0 229.7 C346.8 222.3 343.7 211.8 335.4 203.6 C327.2 195.3 316.4 190.4 309.3 184.0 C302.3 177.5 298.6 170.6 296.3 167.7 Z"/>
<path d="M351.7 213.3 C354.1 212.8 361.9 208.9 364.8 210.1 C367.7 211.3 369.8 217.5 368.1 219.9 C366.3 222.2 357.9 224.3 355.0 223.1 C352.1 222.0 352.3 215.1 351.7 213.3 Z"/>
<path d="M387.6 242.7 C394.7 238.0 412.7 221.9 426.8 216.6 C440.9 211.3 451.8 211.0 465.9 213.3 C480.0 215.7 498.0 222.0 505.1 229.7 C512.1 237.3 509.8 248.1 505.1 255.8 C500.4 263.4 490.7 269.7 479.0 272.1 C467.2 274.4 452.8 269.4 439.8 268.8 C426.9 268.2 417.8 270.0 407.2 268.8 C396.6 267.6 384.6 267.0 381.1 262.3 C377.6 257.6 386.5 246.2 387.6 242.7 Z"/>
<path d="M495.3 255.8 C501.2 253.4 515.6 246.2 527.9 242.7 C540.3 239.2 552.7 233.8 563.8 236.2 C575.0 238.5 587.6 247.5 589.9 255.8 C592.3 264.0 585.1 276.0 576.9 281.9 C568.6 287.7 557.2 287.8 544.2 288.4 C531.3 289.0 513.9 291.0 505.1 285.1 C496.3 279.2 497.1 261.0 495.3 255.8 Z"/>
<path d="M583.4 213.3 C589.3 211.0 601.5 204.4 616.0 200.3 C630.5 196.2 654.6 162.9 664.0 190.5 C673.4 218.1 674.5 326.6 668.2 353.6 C661.9 380.7 640.8 347.6 629.1 340.6 C617.3 333.5 613.0 322.7 603.0 314.5 C593.0 306.3 580.1 304.3 573.6 294.9 C567.1 285.5 565.3 277.0 567.1 262.3 C568.8 247.6 580.5 222.2 583.4 213.3 Z"/>
<path d="M612.8 288.4 C618.0 287.2 635.7 279.5 642.1 281.9 C648.6 284.2 652.2 296.7 648.6 301.4 C645.1 306.1 629.0 310.3 622.5 308.0 C616.1 305.6 614.5 291.9 612.8 288.4 Z"/>
<path d="M629.1 138.3 C636.1 136.0 661.2 120.0 668.2 125.3 C675.3 130.5 672.3 160.0 668.2 167.7 C664.1 175.3 652.4 173.0 645.4 167.7 C638.3 162.4 632.0 143.6 629.1 138.3 Z"/>
<path d="M514.9 105.7 C519.0 105.1 531.3 100.1 537.7 102.4 C544.2 104.8 551.4 113.7 550.8 118.7 C550.2 123.7 540.9 129.6 534.5 130.1 C528.0 130.7 518.4 126.4 514.9 122.0 C511.4 117.6 514.9 108.6 514.9 105.7 Z"/>
<path d="M576.9 66.5 C583.9 65.9 608.4 60.9 616.0 63.3 C623.7 65.6 625.2 76.1 619.3 79.6 C613.4 83.1 591.0 85.2 583.4 82.8 C575.8 80.5 578.0 69.5 576.9 66.5 Z"/>
<path d="M612.8 66.5 C616.3 65.9 628.2 61.5 632.3 63.3 C636.4 65.0 638.5 74.0 635.6 76.3 C632.7 78.7 620.1 78.1 616.0 76.3 C611.9 74.6 613.3 68.3 612.8 66.5 Z"/>
<path d="M201.7 87.7 C203.4 87.7 209.7 86.6 211.5 87.7 C213.2 88.9 213.2 93.1 211.5 94.3 C209.7 95.4 203.4 95.4 201.7 94.3 C199.9 93.1 201.7 88.9 201.7 87.7 Z"/>
</clipPath>
<g clip-path="url(#hillclip)"><rect x="94" y="62" width="568" height="400" filter="url(#ridges2)" opacity=".5"/><rect x="94" y="62" width="568" height="400" filter="url(#ridges)" opacity=".9"/></g>
<path d="M631 438 C610 452 590 462 583 471 S573 500 568.5 512 S566 528 565 534" fill="none" stroke="#2b3524" stroke-width="4.5" opacity=".8" filter="url(#b3)"/>
<g fill="none" stroke="#c6c7c9" stroke-width="2.75" stroke-linejoin="round" stroke-linecap="round" opacity=".95">
<path d="M178.0 68.9 C194.6 68.9 236.7 68.9 270.0 68.9 C303.3 68.9 346.3 68.9 363.0 68.9"/>
<path d="M345.0 64.0 C348.2 64.9 356.7 65.2 363.0 69.0 C369.3 72.8 376.9 82.1 380.0 85.0"/>
<path d="M178.8 63.0 C178.9 64.6 180.2 67.6 179.6 71.8 C179.0 76.0 177.5 80.6 175.6 86.5 C173.7 92.4 172.0 99.5 169.0 104.4 C166.0 109.4 162.5 110.5 159.0 114.0 C155.5 117.5 152.1 119.3 149.5 124.0 C146.9 128.7 146.1 134.1 144.6 140.0 C143.1 145.9 141.6 152.5 141.3 156.6 C141.0 160.7 142.7 161.8 143.0 163.0"/>
<path d="M278.3 63.0 C279.2 64.6 282.3 61.1 283.2 71.8 C284.1 82.5 285.0 110.1 283.2 122.4 C281.4 134.7 277.2 134.7 273.4 140.3 C269.6 145.9 265.0 147.5 262.0 153.4 C259.0 159.3 259.1 166.6 257.0 173.0 C254.9 179.4 254.1 183.1 250.6 189.0 C247.1 194.9 242.3 197.9 237.6 205.6 C232.9 213.3 226.9 227.2 224.5 232.0"/>
<path d="M316.7 63.0 C316.7 68.9 319.8 87.4 316.7 96.0 C313.6 104.6 302.6 108.3 299.5 111.0"/>
<path d="M92.0 138.7 C97.0 138.7 110.8 137.6 120.0 138.7 C129.2 139.8 131.3 141.8 143.0 145.0 C154.7 148.2 168.9 152.5 185.0 156.6 C201.1 160.7 219.7 163.6 232.7 168.0 C245.7 172.4 248.8 176.6 257.0 181.0 C265.2 185.4 269.8 186.4 278.0 192.5 C286.2 198.6 296.6 207.9 302.8 215.0 C309.0 222.1 310.0 227.9 312.6 232.0 C315.2 236.1 314.3 234.7 317.5 237.8 C320.7 240.9 324.9 244.9 330.5 249.0 C336.1 253.1 342.6 256.6 348.5 260.6 C354.4 264.6 357.0 267.0 363.0 271.0 C369.0 275.0 378.6 280.8 382.0 283.0"/>
<path d="M92.0 161.5 C96.8 163.6 109.7 169.2 118.5 173.0 C127.3 176.8 132.5 179.5 141.0 182.7 C149.5 185.9 161.3 189.5 165.8 191.0"/>
<path d="M165.8 191.0 C168.1 189.2 173.5 181.9 178.8 181.0 C184.1 180.1 187.9 183.0 195.0 186.0 C202.1 189.0 210.9 192.7 218.0 197.4 C225.1 202.1 227.3 207.0 234.3 212.0 C241.3 217.0 250.0 221.4 257.0 225.0 C264.0 228.6 267.5 228.1 273.4 232.0 C279.3 235.9 283.9 242.5 289.8 246.8 C295.7 251.1 300.1 251.5 306.0 255.7 C311.9 259.9 316.5 265.1 322.4 270.4 C328.3 275.7 333.1 280.0 338.7 285.0 C344.3 290.0 349.3 295.7 353.4 298.0 C357.5 300.3 360.0 298.0 361.5 298.0"/>
<path d="M92.0 205.5 C97.0 205.7 108.5 205.8 120.0 206.4 C131.5 207.0 145.4 206.6 156.0 208.8 C166.6 211.0 171.8 214.6 178.8 218.6 C185.8 222.6 186.2 227.9 195.0 231.0 C203.8 234.1 216.0 234.2 227.8 236.0 C239.6 237.8 249.2 239.1 260.4 241.0 C271.6 242.9 284.5 245.8 289.8 246.8"/>
<path d="M141.3 166.4 C138.7 168.1 132.2 171.9 126.6 176.0 C121.0 180.1 114.4 184.6 110.0 189.0 C105.6 193.4 104.0 192.9 102.0 200.6 C100.0 208.3 99.4 224.2 99.0 232.0 C98.6 239.8 98.5 237.7 99.7 244.0 C100.9 250.3 104.1 260.2 105.4 267.0 C106.7 273.8 107.3 274.8 107.0 281.8 C106.7 288.8 105.2 298.0 103.8 306.0 C102.4 314.0 101.1 321.1 99.0 326.0 C96.9 330.9 93.3 331.7 92.0 333.0"/>
<path d="M374.0 82.5 C378.1 87.0 389.3 100.5 397.0 107.7 C404.7 114.9 408.8 116.2 416.8 122.4 C424.8 128.6 436.3 137.0 441.3 142.0 C446.3 147.0 440.4 147.7 444.5 150.0 C448.6 152.3 455.8 152.0 464.0 155.0 C472.2 158.0 479.4 163.2 490.0 166.4 C500.6 169.6 511.0 170.9 522.8 173.0 C534.6 175.1 546.6 177.3 555.4 177.8 C564.2 178.3 565.0 178.7 571.8 176.0 C578.6 173.3 585.7 167.9 593.0 163.0 C600.3 158.1 606.9 152.3 612.5 148.5 C618.1 144.7 619.6 143.5 624.0 142.0 C628.4 140.5 633.2 138.2 637.0 140.3 C640.8 142.4 643.2 148.1 645.0 153.4 C646.8 158.7 643.4 165.2 646.8 169.7 C650.2 174.2 660.9 176.9 664.0 178.5"/>
<path d="M413.5 83.2 C417.3 86.1 427.6 93.9 434.7 99.5 C441.8 105.1 441.3 110.8 452.7 114.2 C464.1 117.6 488.3 116.2 498.3 118.3 C508.3 120.4 503.6 122.8 508.0 125.6 C512.4 128.4 517.2 132.9 522.8 133.8 C528.4 134.7 533.1 132.9 539.0 130.5 C544.9 128.1 546.6 123.9 555.4 120.7 C564.2 117.5 578.6 115.5 588.0 112.6 C597.4 109.7 600.0 107.9 607.6 104.4 C615.2 100.9 623.8 95.5 630.5 93.0 C637.2 90.5 639.3 90.5 645.0 90.5 C650.7 90.5 658.9 92.5 662.0 93.0"/>
<path d="M464.0 63.0 C461.1 66.6 453.1 76.6 447.8 83.2 C442.5 89.8 440.3 93.3 434.7 99.5 C429.1 105.7 422.7 110.4 416.8 117.5 C410.9 124.6 405.8 133.1 402.0 138.7 C398.2 144.3 396.8 146.7 395.6 148.5"/>
<path d="M483.7 66.0 C480.8 69.7 472.4 80.5 467.4 86.5 C462.4 92.5 458.4 93.9 456.0 99.5 C453.6 105.1 456.4 111.7 454.3 117.5 C452.2 123.3 446.8 126.2 444.5 132.0 C442.2 137.8 443.1 143.8 441.3 150.0 C439.5 156.2 436.8 159.9 434.7 166.4 C432.6 172.9 431.9 178.9 429.8 186.0 C427.7 193.1 425.2 200.3 423.3 205.6 C421.4 210.9 423.3 211.5 419.2 215.3 C415.1 219.1 407.7 221.6 400.5 226.8 C393.3 232.0 383.7 238.2 379.3 244.3 C374.9 250.4 376.6 257.7 376.0 260.6"/>
<path d="M518.0 63.0 C518.0 68.7 519.2 86.6 518.0 94.6 C516.8 102.6 513.2 102.1 511.4 107.7 C509.6 113.3 510.1 118.6 508.0 125.6 C505.9 132.6 502.9 140.1 500.0 146.8 C497.1 153.5 494.7 158.3 491.8 163.0 C488.9 167.7 485.5 166.8 483.7 173.0 C481.9 179.2 482.3 193.0 482.0 197.4"/>
<path d="M482.0 197.4 C478.8 197.4 470.2 195.7 464.0 197.4 C457.8 199.1 453.1 203.8 447.8 207.0 C442.5 210.2 439.8 213.8 434.7 215.3 C429.6 216.8 422.0 215.3 419.2 215.3"/>
<path d="M482.0 197.4 C485.8 197.5 496.0 197.3 503.0 198.2 C510.0 199.1 512.7 201.1 521.0 202.3 C529.3 203.5 539.6 204.1 549.0 204.7 C558.4 205.3 566.7 207.2 573.4 205.6 C580.1 204.0 581.4 199.3 586.4 195.8 C591.4 192.3 594.8 188.4 601.0 186.0 C607.2 183.6 617.2 183.3 620.7 182.7"/>
<path d="M522.8 173.0 C522.5 178.3 521.9 194.7 521.0 202.3 C520.1 209.9 519.4 210.0 518.0 215.3 C516.6 220.6 515.1 227.9 513.0 232.0 C510.9 236.1 507.4 234.7 506.5 237.8 C505.6 240.9 509.8 245.2 508.0 249.0 C506.2 252.8 500.5 255.4 496.7 259.0 C492.9 262.6 489.9 265.0 487.0 268.8 C484.1 272.6 481.6 268.7 480.4 280.0 C479.2 291.3 479.8 319.8 480.4 331.6 C481.0 343.4 482.5 338.9 483.7 345.5 C484.9 352.1 485.9 361.3 487.0 368.3 C488.1 375.3 489.0 378.9 490.0 384.6 C491.0 390.3 492.1 397.2 492.6 400.0"/>
<path d="M575.0 63.0 C575.6 65.8 576.0 73.5 578.3 78.3 C580.6 83.1 583.9 87.2 588.0 89.7 C592.1 92.2 597.5 89.6 601.0 92.2 C604.5 94.8 604.6 101.0 607.6 104.4 C610.6 107.8 614.4 107.5 617.4 111.0 C620.4 114.5 622.2 120.2 624.0 124.0 C625.8 127.8 626.6 130.6 627.2 132.0"/>
<path d="M660.0 94.6 C657.6 97.2 650.3 104.0 646.8 109.3 C643.3 114.6 641.5 121.4 640.3 124.0"/>
<path d="M419.2 215.3 C421.1 218.3 425.8 227.1 429.8 232.0 C433.8 236.9 438.9 237.8 441.3 242.7 C443.7 247.6 444.5 253.1 443.0 259.0 C441.5 264.9 434.9 269.6 433.0 275.3 C431.1 281.0 432.4 288.0 432.3 290.8"/>
<path d="M586.4 232.0 C588.5 228.7 592.2 217.6 597.8 213.7 C603.4 209.8 610.9 210.1 617.4 210.4 C623.9 210.7 630.8 214.4 633.7 215.3"/>
<path d="M539.0 232.0 C540.8 231.1 543.1 227.7 549.0 226.8 C554.9 225.9 565.1 225.9 571.8 226.8 C578.5 227.7 583.8 231.1 586.4 232.0"/>
<path d="M508.0 240.0 C513.0 239.0 528.9 236.7 536.0 234.5 C543.1 232.3 545.3 229.2 547.3 228.0"/>
<path d="M92.0 234.2 C98.2 235.1 116.2 238.0 126.6 239.4 C136.9 240.8 142.8 239.5 149.5 241.9 C156.2 244.3 157.5 248.3 164.0 252.5 C170.5 256.7 178.0 261.1 185.4 265.5 C192.8 269.9 196.5 272.1 205.0 277.0 C213.5 281.9 225.7 289.0 232.7 293.0 C239.7 297.0 230.2 298.1 244.0 299.0 C257.8 299.9 294.6 299.1 309.3 298.0 C324.0 296.9 318.5 296.2 325.6 293.0 C332.7 289.8 341.4 284.0 348.5 280.0 C355.6 276.0 359.1 274.2 364.8 271.0 C370.5 267.8 377.3 263.6 380.0 262.0"/>
<path d="M92.0 268.6 C99.1 269.2 119.4 270.8 131.5 272.0 C143.6 273.2 149.9 272.1 159.0 275.0 C168.1 277.9 174.9 283.5 182.0 288.0 C189.1 292.5 191.4 294.8 198.4 299.8 C205.4 304.8 213.4 310.7 221.0 316.0 C228.6 321.3 234.3 325.2 240.8 329.0 C247.3 332.8 254.1 335.6 257.0 337.0"/>
<path d="M92.0 306.0 C99.4 306.4 123.0 306.2 133.0 308.0 C143.0 309.8 140.7 311.6 147.8 316.0 C154.9 320.4 167.9 329.4 172.3 332.4"/>
<path d="M526.0 331.6 C531.0 333.5 540.6 340.1 553.8 342.2 C567.0 344.3 588.1 340.4 599.5 343.0 C610.9 345.6 610.6 352.3 617.4 356.9 C624.1 361.5 628.6 363.2 637.0 368.3 C645.4 373.4 659.1 382.0 664.0 385.0"/>
<path d="M224.5 228.0 C222.7 232.4 218.2 243.7 214.7 252.5 C211.2 261.3 210.3 266.7 205.0 277.0 C199.7 287.3 191.3 299.6 185.4 309.6 C179.5 319.6 175.8 325.9 172.3 332.4 C168.8 338.9 167.0 333.3 165.8 345.5 C164.6 357.7 165.8 390.2 165.8 400.0"/>
<path d="M257.0 281.8 C260.0 282.6 264.0 285.1 273.4 286.0 C282.8 286.9 302.8 286.6 309.3 286.7"/>
<path d="M221.0 241.0 C222.5 244.5 225.8 255.0 229.4 260.6 C233.0 266.2 235.8 268.2 240.8 272.0 C245.8 275.8 254.1 280.0 257.0 281.8"/>
<path d="M310.0 273.7 C311.2 272.2 312.8 269.6 316.5 265.5 C320.2 261.4 328.0 253.6 330.5 251.0"/>
<path d="M376.0 277.0 C378.9 278.4 386.4 282.5 392.3 285.0 C398.2 287.5 392.7 289.6 408.6 290.8 C424.5 292.0 467.5 291.5 480.4 291.6"/>
<path d="M376.0 293.0 C378.9 294.5 386.4 297.3 392.3 301.4 C398.2 305.5 402.2 313.1 408.6 316.0 C415.0 318.9 424.4 317.4 427.9 317.7"/>
<path d="M427.9 331.6 C424.4 335.8 414.2 347.2 408.6 355.0 C403.0 362.8 401.4 367.1 397.0 374.8 C392.6 382.5 386.3 393.8 384.0 398.0"/>
<path d="M527.7 332.4 C526.0 337.1 521.8 350.9 518.0 358.5 C514.2 366.1 510.3 368.9 506.5 374.8 C502.7 380.7 499.2 386.5 496.7 391.0 C494.2 395.5 493.3 398.4 492.6 400.0"/>
<path d="M451.0 400.0 C454.0 396.7 460.4 387.1 467.4 381.4 C474.4 375.7 484.7 371.5 490.0 368.3 C495.3 365.1 490.8 364.4 496.7 363.4 C502.6 362.4 514.9 362.3 522.8 362.6 C530.7 362.9 536.7 363.4 540.8 365.0 C544.9 366.6 543.6 370.2 545.7 371.6 C547.8 373.0 550.2 373.6 552.2 373.0 C554.2 372.4 551.1 369.1 557.0 368.3 C562.9 367.5 579.8 370.7 584.8 368.3 C589.8 365.9 584.8 357.4 584.8 355.0"/>
<path d="M545.7 342.2 C545.4 345.1 544.9 354.4 544.0 358.5 C543.1 362.6 540.8 360.6 540.8 365.0 C540.8 369.4 543.1 376.7 544.0 383.0 C544.9 389.3 545.4 396.9 545.7 400.0"/>
<path d="M617.4 356.9 C617.4 361.6 618.3 375.2 617.4 383.0 C616.5 390.8 613.4 396.9 612.5 400.0"/>
<path d="M599.5 343.0 C600.7 341.1 604.4 336.6 606.0 332.4 C607.6 328.2 604.1 321.5 608.5 319.4 C612.9 317.3 623.9 319.8 630.5 321.0 C637.1 322.2 639.3 326.0 645.0 326.0 C650.7 326.0 658.9 321.9 662.0 321.0"/>
<path d="M376.0 365.0 C378.9 365.2 388.2 364.7 392.0 366.0 C395.8 367.3 396.1 370.9 397.0 372.0"/>
<path d="M166.6 398.0 C166.6 415.3 165.6 474.0 166.6 494.0 C167.6 514.0 172.4 502.9 172.3 509.0 C172.2 515.1 167.0 517.4 166.0 528.0 C165.0 538.6 166.5 560.8 166.6 568.0"/>
<path d="M272.6 576.0 L268.5 586.0"/>
<path d="M92.0 459.2 C93.8 459.5 98.8 460.9 102.0 460.8 C105.2 460.7 85.2 459.0 110.0 458.7 C134.8 458.4 191.0 459.1 240.0 459.2 C289.0 459.3 356.4 459.2 382.0 459.2"/>
<path d="M382.5 398.0 C382.5 409.7 381.3 448.2 382.5 463.0 C383.7 477.8 387.7 461.1 389.0 480.0 C390.3 498.9 389.7 552.2 389.9 568.0"/>
<path d="M493.5 398.0 C493.5 409.7 492.3 447.3 493.5 463.0 C494.7 478.7 497.7 477.6 500.0 485.0 C502.3 492.4 505.2 489.1 506.5 504.0 C507.8 518.9 507.2 556.5 507.3 568.0"/>
<path d="M614.0 398.0 C614.0 401.8 613.6 413.3 614.2 419.2 C614.8 425.1 615.6 426.8 617.4 430.6 C619.2 434.4 622.8 437.2 624.0 440.4 C625.2 443.6 624.0 447.1 624.0 448.6"/>
<path d="M555.4 436.3 C559.8 434.5 570.6 429.6 580.0 426.5 C589.4 423.4 592.5 419.9 607.6 419.2 C622.7 418.5 653.8 421.9 664.0 422.5"/>
<path d="M563.6 458.4 C565.7 457.8 569.2 456.8 575.0 455.0 C580.8 453.2 587.8 450.9 596.0 448.6 C604.2 446.3 616.3 443.2 620.7 442.0"/>
<path d="M539.0 469.8 C543.4 470.5 555.4 472.3 563.6 473.9 C571.8 475.5 576.0 478.1 584.8 478.7 C593.6 479.3 605.2 477.0 612.5 477.0 C619.8 477.0 623.2 478.4 625.6 478.7"/>
<path d="M571.8 510.6 C573.3 511.3 570.5 513.9 580.0 514.6 C589.5 515.3 616.7 514.6 624.8 514.6"/>
<path d="M545.7 536.7 C547.2 536.0 549.1 533.6 553.8 532.6 C558.5 531.6 567.1 532.2 571.8 531.0 C576.5 529.8 569.4 527.0 580.0 526.0 C590.6 525.0 615.4 525.5 630.5 525.2 C645.6 524.9 658.0 524.5 664.0 524.4"/>
<path d="M92.0 560.0 C105.3 560.0 150.2 557.7 165.8 560.0 C181.4 562.3 173.4 568.1 178.8 573.0 C184.2 577.9 192.9 584.5 196.0 587.0"/>
<path d="M156.0 613.8 C158.6 613.2 165.4 609.7 170.7 610.6 C176.0 611.5 179.8 616.6 185.4 618.7 C191.0 620.8 195.8 622.3 201.7 622.0 C207.6 621.7 213.9 618.2 218.0 617.0 C222.1 615.8 216.3 615.6 224.5 615.5 C232.7 615.4 235.3 616.2 263.7 616.3 C292.1 616.4 360.7 616.3 382.0 616.3"/>
<path d="M263.7 616.3 C261.3 617.9 254.4 621.3 250.6 625.3 C246.8 629.3 244.8 634.2 242.5 638.3 C240.2 642.4 238.5 646.3 237.6 648.0"/>
<path d="M329.0 582.8 C327.8 583.7 324.5 585.9 322.4 587.7 C320.3 589.5 318.4 573.5 317.5 592.6 C316.6 611.7 317.5 675.6 317.5 693.8"/>
<path d="M382.0 694.6 C368.6 694.7 322.2 694.1 307.7 695.4 C293.2 696.7 304.7 700.8 301.2 702.0 C297.7 703.2 290.4 702.0 288.0 702.0"/>
<path d="M545.7 560.0 C545.8 561.8 545.6 567.1 546.0 570.0 C546.4 572.9 547.6 575.2 548.0 576.3"/>
<path d="M376.0 667.7 C396.3 667.7 466.9 666.7 488.6 667.7 C510.3 668.7 471.8 672.2 496.7 673.4 C521.6 674.6 603.7 674.1 627.2 674.2"/>
<path d="M376.0 695.4 C396.6 695.1 468.2 693.4 490.2 693.8 C512.2 694.2 489.5 697.5 498.3 697.8 C507.1 698.1 516.1 695.8 539.0 695.4 C561.9 695.0 610.0 695.4 625.6 695.4"/>
<path d="M397.2 720.7 C415.7 720.7 478.6 720.3 500.0 720.7 C521.4 721.1 506.3 722.6 516.3 723.0 C526.3 723.4 548.4 723.0 555.4 723.0"/>
<path d="M659.8 636.7 C656.9 640.5 648.5 652.0 643.5 657.9 C638.5 663.8 634.1 667.2 632.0 669.3"/>
<path d="M627.2 675.8 C630.4 678.4 639.1 685.8 645.0 690.5 C650.9 695.2 656.4 699.2 659.8 702.0 C663.2 704.8 663.2 705.3 664.0 706.0"/>
<path d="M637.0 684.0 C634.1 686.6 626.6 692.8 620.7 698.7 C614.8 704.6 609.4 711.0 604.4 716.6 C599.4 722.2 596.3 725.8 593.0 730.0 C589.7 734.2 587.3 738.2 586.0 740.0"/>
<path d="M448.6 726.0 C448.6 741.8 449.3 796.4 448.6 814.0 C447.9 831.6 447.0 819.5 444.5 823.9 C442.0 828.3 436.5 836.0 434.7 838.6"/>
<path d="M551.4 726.0 C551.4 731.9 552.1 751.0 551.4 758.6 C550.7 766.2 548.0 766.6 547.3 768.4"/>
<path d="M578.3 726.0 C578.6 728.3 577.4 735.2 580.0 739.0 C582.6 742.8 587.7 745.0 593.0 747.2 C598.3 749.4 606.4 750.6 609.3 751.3"/>
<path d="M604.4 726.0 C602.6 727.4 598.7 731.7 594.6 734.0 C590.5 736.3 583.9 738.1 581.5 739.0"/>
<path d="M597.8 734.0 C597.8 736.3 599.6 741.7 597.8 747.0 C596.0 752.3 590.6 757.6 588.0 763.5 C585.4 769.4 583.8 772.7 583.2 779.8 C582.6 786.9 585.4 796.5 584.8 802.7 C584.2 808.9 582.3 808.7 580.0 814.0 C577.7 819.3 575.3 824.4 571.8 832.0 C568.3 839.6 558.8 848.6 560.3 856.5 C561.8 864.4 577.9 870.1 580.0 876.0 C582.1 881.9 573.9 885.6 571.8 889.0 C569.7 892.4 569.1 893.8 568.5 894.8"/>
<path d="M584.8 814.0 C588.3 813.1 598.5 811.3 604.4 809.0 C610.3 806.7 611.5 802.7 617.4 801.0 C623.3 799.3 628.6 799.7 637.0 799.4 C645.4 799.1 659.1 799.4 664.0 799.4"/>
<path d="M653.3 763.5 C651.0 766.4 643.2 773.6 640.3 779.8 C637.4 786.0 636.4 791.0 637.0 797.8 C637.6 804.6 642.1 812.1 643.5 817.4 C644.9 822.7 646.2 822.9 645.0 827.0 C643.8 831.1 641.4 837.2 637.0 840.2 C632.6 843.2 629.5 845.3 620.7 843.5 C611.9 841.7 594.2 828.7 588.0 830.4 C581.8 832.1 587.8 845.0 586.4 853.2 C585.0 861.4 581.2 871.9 580.0 876.0"/>
<path d="M627.2 845.0 C629.0 848.0 634.1 856.4 637.0 861.4 C639.9 866.4 642.9 867.4 643.5 872.8 C644.1 878.2 643.2 884.4 640.3 891.6 C637.4 898.8 630.1 906.1 627.2 912.8 C624.3 919.5 628.1 925.8 624.0 929.0 C619.9 932.2 607.9 930.4 604.4 930.7"/>
<path d="M620.7 755.4 C623.6 756.6 631.1 760.5 637.0 762.0 C642.9 763.5 648.4 763.0 653.3 763.5 C658.2 764.0 662.1 764.7 664.0 765.0"/>
<path d="M645.0 726.0 C642.4 728.9 636.6 735.3 630.5 742.3 C624.4 749.3 618.6 755.6 611.0 765.0 C603.4 774.4 592.1 789.2 588.0 794.5"/>
<path d="M552.2 881.8 C555.1 884.1 564.4 889.8 568.5 894.8 C572.6 899.8 568.5 903.0 575.0 909.5 C581.5 916.0 596.2 924.0 604.4 930.7 C612.6 937.5 613.7 939.9 620.7 947.0 C627.7 954.1 635.7 963.0 643.5 970.0 C651.3 977.0 660.3 983.1 664.0 986.0"/>
<path d="M568.5 894.8 L580.0 877.0"/>
<path d="M488.0 868.0 C488.4 870.2 487.8 876.4 490.0 880.0 C492.2 883.6 494.6 885.7 500.0 888.0 C505.4 890.3 511.4 890.5 520.0 893.0 C528.6 895.5 543.0 900.4 548.0 902.0"/>
<path d="M172.0 331.6 L526.0 331.6"/>
<path d="M92.0 357.0 L180.5 355.0 L192.0 358.5 L338.7 358.5 L355.0 365.0 L382.0 365.0"/>
<path d="M257.0 281.8 L257.0 400.0"/>
<path d="M310.0 273.7 L310.0 383.0 L335.5 384.6 L337.0 400.0"/>
<path d="M361.5 286.7 L361.5 365.0 L368.0 375.0 L382.0 383.0"/>
<path d="M427.9 290.8 L427.9 331.6"/>
<path d="M544.0 383.0 L662.0 383.0"/>
<path d="M101.3 398.0 L101.3 408.0"/>
<path d="M256.6 398.0 L256.6 484.5"/>
<path d="M337.0 398.0 L337.0 568.0"/>
<path d="M272.6 486.0 L272.6 576.0"/>
<path d="M236.0 437.2 L382.0 437.2"/>
<path d="M130.0 484.5 L250.6 484.5"/>
<path d="M255.5 486.0 L382.0 486.0"/>
<path d="M272.6 511.4 L337.0 511.4"/>
<path d="M337.0 510.8 L418.4 510.6"/>
<path d="M337.0 562.8 L433.0 562.8"/>
<path d="M92.0 535.0 L143.0 535.0"/>
<path d="M170.7 536.7 L382.0 536.7"/>
<path d="M92.0 561.0 L165.8 561.0"/>
<path d="M441.3 422.5 L441.3 568.0"/>
<path d="M467.4 435.5 L467.4 568.0"/>
<path d="M545.7 398.0 L545.7 568.0"/>
<path d="M624.8 479.6 L624.8 528.5"/>
<path d="M376.0 436.3 L555.4 436.3"/>
<path d="M376.0 458.4 L563.6 458.4"/>
<path d="M376.0 484.5 L467.4 484.5"/>
<path d="M418.4 510.6 L571.8 510.6"/>
<path d="M433.0 536.7 L545.7 536.7"/>
<path d="M433.0 562.8 L555.4 562.8"/>
<path d="M263.7 591.0 L263.7 615.5"/>
<path d="M317.5 668.5 L382.0 668.5"/>
<path d="M395.6 605.7 L395.6 732.0"/>
<path d="M447.8 602.4 L447.8 732.0"/>
<path d="M473.9 599.2 L473.9 732.0"/>
<path d="M500.0 592.6 L500.0 732.0"/>
<path d="M552.2 581.2 L552.2 732.0"/>
<path d="M578.3 581.2 L578.3 732.0"/>
<path d="M441.3 560.0 L441.3 576.3"/>
<path d="M467.4 560.0 L467.4 579.6"/>
<path d="M508.0 560.0 L508.0 578.0"/>
<path d="M625.6 582.8 L625.6 613.8"/>
<path d="M433.0 563.3 L555.4 563.3"/>
<path d="M376.0 616.3 L664.0 616.3"/>
<path d="M578.3 707.6 L611.0 707.6"/>
<path d="M630.5 635.9 L664.0 635.9"/>
<path d="M397.2 726.0 L397.2 812.5"/>
<path d="M500.8 726.0 L500.8 823.9"/>
<path d="M412.0 772.5 L500.8 772.5"/>
</g>
</g>
<path d="M126.6 609.0 C130.4 609.9 140.5 611.5 147.8 613.8 C155.1 616.1 160.6 619.1 167.4 622.0 C174.2 624.9 179.2 626.8 185.4 630.0 C191.6 633.2 197.6 636.8 201.7 640.0 C205.8 643.2 204.2 645.7 208.0 648.0 C211.8 650.3 218.5 650.9 222.9 653.0 C227.3 655.1 228.3 657.2 232.7 659.5 C237.1 661.8 242.9 663.1 247.3 666.0 C251.7 668.9 252.9 672.0 257.0 675.8 C261.1 679.6 265.5 682.6 270.2 687.0 C274.9 691.4 278.8 695.6 283.2 700.0 C287.6 704.4 290.5 707.2 294.6 711.7 C298.7 716.2 301.4 718.8 306.0 724.8 C310.6 730.8 313.9 737.6 320.0 745.0 C326.1 752.4 332.3 758.6 340.0 766.0 C347.7 773.4 356.5 780.0 363.0 786.0 C369.5 792.0 370.7 794.4 376.0 799.4 C381.3 804.4 385.0 808.7 392.3 814.0 C399.6 819.3 408.0 823.5 416.8 828.8 C425.6 834.1 433.4 838.8 441.3 843.5 C449.2 848.2 454.4 851.7 460.8 854.9 C467.2 858.1 472.8 859.4 477.0 861.4 C481.2 863.4 483.1 862.0 484.0 866.0 C484.9 870.0 480.9 879.1 482.0 883.4 C483.1 887.7 485.6 887.9 490.0 890.0 C494.4 892.1 500.6 893.2 506.5 894.8 C512.4 896.4 516.9 897.2 522.8 899.0 C528.6 900.8 533.1 902.3 539.0 904.6 C544.9 906.9 551.0 909.9 555.4 912.0 C559.8 914.1 560.6 914.8 563.6 916.0 C566.6 917.2 567.4 915.5 571.8 918.5 C576.2 921.5 582.1 928.4 588.0 932.4 C593.9 936.4 598.5 937.0 604.4 940.5 C610.3 944.0 614.8 947.3 620.7 952.0 C626.6 956.7 631.7 961.6 637.0 966.6 C642.3 971.6 644.4 974.8 650.0 979.7 C655.6 984.6 664.8 991.4 668.0 994.0" fill="none" stroke="#cfc6a8" stroke-width="3" opacity=".7"/>
<g fill="none" stroke="#272b35" stroke-width="5.6" stroke-linejoin="round" stroke-linecap="round" opacity=".9">
<path d="M133.0 60.0 C133.0 64.1 134.2 75.9 133.0 83.0 C131.8 90.1 128.2 93.6 126.6 99.5 C125.0 105.4 124.9 109.3 124.0 115.8 C123.1 122.3 122.4 128.6 121.7 135.4 C121.0 142.2 119.9 147.5 120.0 153.4 C120.1 159.3 123.4 162.1 122.5 168.0 C121.6 173.9 116.0 181.3 115.0 186.0 C114.0 190.7 114.7 189.9 116.8 194.0 C118.9 198.1 124.4 202.7 126.6 208.8 C128.8 214.9 128.7 221.6 129.0 228.0 C129.3 234.4 129.0 237.0 128.3 244.3 C127.6 251.6 125.7 260.9 125.0 268.8 C124.3 276.7 126.0 282.5 124.2 288.4 C122.4 294.3 117.4 297.0 115.2 301.4 C113.0 305.8 112.4 308.4 112.0 312.8 C111.6 317.2 113.2 321.3 112.8 326.0 C112.3 330.7 110.8 334.3 109.5 339.0 C108.2 343.7 107.0 347.0 105.4 352.0 C103.8 357.0 102.3 359.7 100.5 366.7 C98.7 373.7 97.1 384.1 95.6 391.0 C94.1 397.9 92.6 402.5 92.0 405.0"/>
<path d="M92.0 126.0 C97.7 124.3 113.9 118.6 123.4 116.6 C132.9 114.6 137.6 114.1 144.6 115.0 C151.6 115.9 151.1 120.5 162.5 121.5 C173.9 122.5 194.5 121.6 208.0 120.7 C221.5 119.8 227.6 118.7 237.6 116.6 C247.6 114.5 254.3 110.9 263.7 109.3 C273.1 107.7 281.6 107.4 289.8 107.7 C298.0 108.0 302.2 109.5 309.3 111.0 C316.4 112.5 323.1 113.5 329.0 115.8 C334.9 118.1 336.7 121.8 342.0 124.0 C347.3 126.2 352.2 127.1 358.3 128.0 C364.4 128.9 371.1 127.9 376.0 128.9 C380.9 129.9 382.0 130.6 385.8 133.8 C389.6 137.0 392.0 141.8 397.0 146.8 C402.0 151.8 405.5 156.8 413.5 161.5 C421.5 166.2 431.6 169.2 441.3 173.0 C451.0 176.8 458.6 179.8 467.4 182.7 C476.2 185.6 480.0 187.2 490.0 189.0 C500.0 190.8 511.0 192.0 522.8 192.5 C534.6 193.0 543.7 192.9 555.4 191.7 C567.1 190.5 577.7 188.1 588.0 186.0 C598.3 183.9 605.4 181.8 612.5 180.0 C619.6 178.2 621.6 179.1 627.2 176.0 C632.8 172.9 638.2 168.3 643.5 163.0 C648.8 157.7 652.6 152.2 656.6 146.8 C660.6 141.4 664.3 135.5 666.0 133.0"/>
<path d="M92.0 145.0 C95.2 145.3 101.4 143.8 110.0 146.8 C118.6 149.8 130.9 154.2 139.7 161.5 C148.5 168.8 153.1 179.7 159.0 187.6 C164.9 195.5 167.3 199.1 172.3 205.6 C177.3 212.1 182.9 218.7 187.0 223.5 C191.1 228.3 192.7 227.9 195.0 232.0 C197.3 236.1 195.0 239.7 200.0 246.0 C205.0 252.3 216.4 259.4 222.9 267.0 C229.4 274.6 231.3 280.7 236.0 288.4 C240.7 296.1 244.6 302.3 249.0 309.6 C253.4 316.9 256.6 323.7 260.4 329.0 C264.2 334.3 264.9 333.7 270.2 339.0 C275.5 344.3 280.4 350.9 289.8 358.5 C299.2 366.1 312.4 374.3 322.4 381.4 C332.4 388.5 338.2 393.2 345.2 398.0 C352.2 402.8 356.0 404.0 361.5 407.8 C367.0 411.6 369.0 414.7 376.0 419.2 C383.0 423.7 393.8 429.5 400.5 433.0 C407.2 436.5 406.2 433.9 413.5 438.8 C420.8 443.7 431.6 452.9 441.3 460.0 C451.0 467.1 459.2 472.4 467.4 478.0 C475.6 483.6 480.0 484.8 487.0 491.0 C494.0 497.2 500.1 504.9 506.5 512.2 C512.9 519.5 516.9 525.0 522.8 531.8 C528.6 538.5 533.4 543.5 539.0 549.7 C544.6 555.9 550.0 561.5 553.8 566.0 C557.6 570.5 556.8 569.9 560.3 574.7 C563.8 579.5 569.0 585.9 573.4 592.6 C577.8 599.4 579.2 606.6 584.8 612.2 C590.4 617.8 598.5 619.8 604.4 623.6 C610.3 627.4 614.5 629.6 617.4 633.4 C620.3 637.2 617.2 641.3 620.7 644.8 C624.2 648.3 628.8 649.2 637.0 653.0 C645.2 656.8 660.8 663.7 666.0 666.0"/>
<path d="M377.9 60.0 C376.7 64.8 374.0 78.5 371.0 86.5 C368.0 94.5 367.3 98.2 361.5 104.4 C355.7 110.6 346.3 114.8 338.7 120.7 C331.1 126.6 326.6 130.5 319.0 137.0 C311.4 143.5 303.3 149.6 296.3 156.6 C289.3 163.6 283.8 168.9 280.0 176.0 C276.2 183.1 277.3 188.7 275.0 195.8 C272.7 202.9 269.6 209.5 267.0 215.3 C264.4 221.1 263.4 221.9 260.4 228.0 C257.4 234.1 254.1 241.1 250.6 249.0 C247.1 256.9 244.6 263.4 240.8 272.0 C237.0 280.6 232.5 288.6 229.4 296.5 C226.3 304.4 224.9 308.9 223.7 316.0 C222.5 323.1 223.2 328.1 222.9 335.7 C222.6 343.3 221.7 347.3 222.0 358.5 C222.3 369.7 223.2 388.0 224.5 398.0 C225.8 408.0 227.3 407.0 229.4 414.3 C231.5 421.6 233.9 431.5 236.0 438.8 C238.1 446.1 238.2 448.5 240.8 455.0 C243.4 461.5 247.7 467.9 250.6 474.7 C253.5 481.5 255.5 485.9 257.0 492.6 C258.5 499.3 258.8 504.1 258.8 512.0 C258.8 519.9 258.5 529.6 257.0 536.7 C255.5 543.8 252.9 545.7 250.6 551.3 C248.3 556.9 245.4 563.2 244.0 568.0 C242.6 572.8 243.0 574.4 243.0 578.0 C243.0 581.6 243.8 586.2 244.0 588.0"/>
<path d="M627.2 176.0 C625.4 179.0 619.6 186.6 617.4 192.5 C615.2 198.4 615.0 203.9 615.0 208.8 C615.0 213.8 617.6 216.5 617.4 220.0 C617.2 223.5 617.0 223.3 614.0 228.0 C611.0 232.7 605.7 240.7 601.0 246.0 C596.3 251.3 592.1 252.4 588.0 257.4 C583.9 262.4 582.1 268.1 578.3 273.7 C574.5 279.3 569.8 283.4 566.9 288.4 C564.0 293.4 563.2 295.8 562.0 301.4 C560.8 307.0 561.5 312.6 560.3 319.4 C559.1 326.2 556.1 333.7 555.4 339.0 C554.7 344.3 555.6 345.2 556.3 348.7 C557.0 352.2 558.9 352.0 559.5 358.5 C560.1 365.0 559.6 377.9 559.5 385.0 C559.4 392.1 558.6 392.1 558.7 398.0 C558.8 403.9 559.1 411.1 560.3 417.6 C561.5 424.1 564.0 427.4 565.2 433.9 C566.4 440.4 566.6 443.5 566.9 453.5 C567.2 463.5 567.2 479.4 566.9 489.4 C566.6 499.4 566.4 502.6 565.2 509.0 C564.0 515.4 561.5 520.8 560.3 525.2 C559.1 529.6 558.1 529.9 558.7 533.4 C559.3 536.9 563.0 541.0 563.6 544.8 C564.2 548.6 562.9 550.4 562.0 554.6 C561.1 558.8 559.0 564.3 558.7 568.0 C558.4 571.7 560.0 573.7 560.3 575.0"/>
<path d="M92.0 331.5 C95.3 333.1 104.1 338.8 110.3 340.6 C116.5 342.4 117.8 341.7 126.6 341.4 C135.4 341.1 147.5 339.7 159.3 339.0 C171.1 338.3 179.1 337.8 192.0 337.3 C204.9 336.9 224.0 336.6 231.0 336.5"/>
<path d="M100.5 81.6 C105.2 79.5 118.1 73.5 126.6 70.0 C135.1 66.5 144.0 63.4 147.8 62.0"/>
<path d="M353.0 60.0 C356.1 61.1 364.4 65.6 370.0 66.0 C375.6 66.4 381.5 62.7 384.0 62.0"/>
<path d="M630.5 62.0 C632.8 62.9 637.1 66.0 643.5 66.9 C649.9 67.8 662.0 66.9 666.0 66.9"/>
<path d="M92.0 404.5 C98.2 404.6 113.3 405.4 126.6 405.3 C139.9 405.2 155.8 403.7 165.8 403.7 C175.8 403.7 171.4 405.2 182.0 405.3 C192.6 405.4 206.9 404.3 224.5 404.2 C242.1 404.1 268.2 403.7 280.0 404.9 C291.8 406.1 285.1 407.6 289.8 411.0 C294.5 414.4 300.1 420.0 306.0 424.0 C311.9 428.0 315.9 429.8 322.4 433.0 C328.9 436.2 332.4 440.1 342.0 441.7 C351.6 443.3 365.5 441.9 376.0 441.7 C386.5 441.5 393.8 441.2 400.5 440.7 C407.2 440.2 407.3 437.9 413.5 438.8 C419.7 439.7 410.9 444.5 434.7 445.6 C458.5 446.7 524.0 444.7 545.7 445.0 C567.4 445.3 551.3 445.5 555.4 447.0 C559.5 448.5 564.1 451.4 568.5 453.5 C572.9 455.6 576.5 457.5 580.0 458.4 C583.5 459.3 583.6 459.6 588.0 458.7 C592.4 457.8 598.8 455.1 604.4 453.5 C610.0 451.9 614.9 450.0 619.0 450.0 C623.1 450.0 624.0 451.3 627.2 453.5 C630.4 455.7 633.5 461.2 637.0 462.4 C640.5 463.6 643.3 461.6 646.8 460.0 C650.3 458.4 653.1 456.0 656.6 453.5 C660.1 451.0 664.3 447.4 666.0 446.0"/>
<path d="M216.0 589.4 C234.9 589.4 292.0 588.8 320.8 589.4 C349.6 590.0 363.1 591.6 376.0 592.6 C388.9 593.6 386.4 593.8 392.3 595.0 C398.2 596.2 403.6 597.4 408.6 599.0 C413.6 600.6 408.2 602.9 420.0 603.7 C431.8 604.5 460.7 603.9 473.9 603.7 C487.1 603.5 487.0 603.7 493.5 602.4 C500.0 601.1 504.5 599.3 509.8 596.7 C515.1 594.1 518.4 590.5 522.8 587.7 C527.2 584.9 527.5 582.5 534.2 581.2 C541.0 579.9 550.6 580.4 560.3 580.4 C570.0 580.4 580.1 580.3 588.0 581.2 C595.9 582.1 596.3 584.7 604.4 585.3 C612.5 585.9 627.9 584.6 633.0 584.5"/>
<path d="M92.0 510.6 C94.1 511.3 98.1 513.6 103.8 514.6 C109.5 515.6 117.5 515.0 123.4 516.3 C129.3 517.6 131.7 519.8 136.4 522.0 C141.1 524.2 143.3 525.9 149.5 528.5 C155.7 531.1 160.4 534.9 170.7 536.7 C181.0 538.5 198.1 536.3 206.6 538.3 C215.1 540.3 213.3 543.9 218.0 548.0 C222.7 552.1 228.6 557.2 232.7 561.0 C236.8 564.8 238.8 564.1 240.8 569.0 C242.8 573.9 243.4 584.6 244.0 588.0"/>
<path d="M320.8 589.4 C323.4 592.0 329.2 597.5 335.4 604.0 C341.6 610.5 348.5 618.5 355.0 625.3 C361.5 632.1 367.5 638.1 371.3 641.6 C375.1 645.1 372.2 641.3 376.0 644.8 C379.8 648.3 386.4 655.4 392.3 661.0 C398.2 666.6 402.1 669.9 408.6 675.8 C415.1 681.7 421.1 687.3 428.2 693.8 C435.3 700.3 441.4 705.9 447.8 711.7 C454.2 717.5 458.1 722.0 464.0 726.0 C469.9 730.0 473.4 730.9 480.4 734.0 C487.4 737.1 485.4 740.8 503.0 743.0 C520.6 745.2 560.0 743.9 578.3 746.4 C596.6 748.9 595.0 752.8 604.4 757.0 C613.8 761.2 619.4 765.0 630.5 770.0 C641.6 775.0 659.6 781.9 666.0 784.5"/>
<path d="M637.0 462.4 C635.5 463.7 630.9 466.7 628.8 469.8 C626.7 472.9 625.3 474.9 625.6 479.6 C625.9 484.3 629.2 490.0 630.5 495.9 C631.8 501.8 632.5 500.7 633.0 512.2 C633.5 523.7 633.3 547.0 633.4 560.0 C633.5 573.0 633.9 574.2 633.8 584.5 C633.7 594.8 633.6 606.7 633.0 617.0 C632.4 627.3 631.3 632.8 630.5 641.6 C629.7 650.4 629.7 659.3 628.8 666.0 C627.9 672.7 628.5 673.7 625.6 679.0 C622.7 684.3 616.9 689.8 612.5 695.4 C608.1 701.0 605.7 704.5 601.0 710.0 C596.3 715.5 591.1 720.5 586.4 726.0 C581.7 731.5 579.1 735.4 575.0 740.7 C570.9 746.0 568.3 749.8 563.6 755.4 C558.9 761.0 553.4 766.4 549.0 771.7 C544.6 777.0 543.7 778.8 539.0 784.7 C534.3 790.6 528.9 797.2 522.8 804.3 C516.7 811.4 508.1 820.4 504.9 823.9"/>
<path d="M532.6 746.4 C534.4 748.9 538.3 755.2 542.4 760.3 C546.5 765.4 550.1 768.8 555.4 775.0 C560.7 781.2 566.5 788.9 571.8 794.5 C577.1 800.1 581.6 800.7 584.8 806.0 C588.0 811.3 587.4 818.9 589.7 823.9 C592.0 828.9 593.4 829.9 597.8 833.7 C602.2 837.5 608.4 841.2 614.0 845.0 C619.6 848.8 623.2 851.1 628.8 854.9 C634.4 858.7 640.6 862.2 645.0 866.3 C649.4 870.4 649.5 874.2 653.3 877.7 C657.1 881.2 663.7 884.5 666.0 886.0"/>
<path d="M666.0 725.0 C662.2 725.8 649.9 727.7 645.0 729.3 C640.1 730.9 639.8 733.2 638.6 734.0"/>
</g>
<g fill="none" stroke="#f4a65e" stroke-width="3.3" stroke-linejoin="round" stroke-linecap="round">
<path d="M133.0 60.0 C133.0 64.1 134.2 75.9 133.0 83.0 C131.8 90.1 128.2 93.6 126.6 99.5 C125.0 105.4 124.9 109.3 124.0 115.8 C123.1 122.3 122.4 128.6 121.7 135.4 C121.0 142.2 119.9 147.5 120.0 153.4 C120.1 159.3 123.4 162.1 122.5 168.0 C121.6 173.9 116.0 181.3 115.0 186.0 C114.0 190.7 114.7 189.9 116.8 194.0 C118.9 198.1 124.4 202.7 126.6 208.8 C128.8 214.9 128.7 221.6 129.0 228.0 C129.3 234.4 129.0 237.0 128.3 244.3 C127.6 251.6 125.7 260.9 125.0 268.8 C124.3 276.7 126.0 282.5 124.2 288.4 C122.4 294.3 117.4 297.0 115.2 301.4 C113.0 305.8 112.4 308.4 112.0 312.8 C111.6 317.2 113.2 321.3 112.8 326.0 C112.3 330.7 110.8 334.3 109.5 339.0 C108.2 343.7 107.0 347.0 105.4 352.0 C103.8 357.0 102.3 359.7 100.5 366.7 C98.7 373.7 97.1 384.1 95.6 391.0 C94.1 397.9 92.6 402.5 92.0 405.0"/>
<path d="M92.0 126.0 C97.7 124.3 113.9 118.6 123.4 116.6 C132.9 114.6 137.6 114.1 144.6 115.0 C151.6 115.9 151.1 120.5 162.5 121.5 C173.9 122.5 194.5 121.6 208.0 120.7 C221.5 119.8 227.6 118.7 237.6 116.6 C247.6 114.5 254.3 110.9 263.7 109.3 C273.1 107.7 281.6 107.4 289.8 107.7 C298.0 108.0 302.2 109.5 309.3 111.0 C316.4 112.5 323.1 113.5 329.0 115.8 C334.9 118.1 336.7 121.8 342.0 124.0 C347.3 126.2 352.2 127.1 358.3 128.0 C364.4 128.9 371.1 127.9 376.0 128.9 C380.9 129.9 382.0 130.6 385.8 133.8 C389.6 137.0 392.0 141.8 397.0 146.8 C402.0 151.8 405.5 156.8 413.5 161.5 C421.5 166.2 431.6 169.2 441.3 173.0 C451.0 176.8 458.6 179.8 467.4 182.7 C476.2 185.6 480.0 187.2 490.0 189.0 C500.0 190.8 511.0 192.0 522.8 192.5 C534.6 193.0 543.7 192.9 555.4 191.7 C567.1 190.5 577.7 188.1 588.0 186.0 C598.3 183.9 605.4 181.8 612.5 180.0 C619.6 178.2 621.6 179.1 627.2 176.0 C632.8 172.9 638.2 168.3 643.5 163.0 C648.8 157.7 652.6 152.2 656.6 146.8 C660.6 141.4 664.3 135.5 666.0 133.0"/>
<path d="M92.0 145.0 C95.2 145.3 101.4 143.8 110.0 146.8 C118.6 149.8 130.9 154.2 139.7 161.5 C148.5 168.8 153.1 179.7 159.0 187.6 C164.9 195.5 167.3 199.1 172.3 205.6 C177.3 212.1 182.9 218.7 187.0 223.5 C191.1 228.3 192.7 227.9 195.0 232.0 C197.3 236.1 195.0 239.7 200.0 246.0 C205.0 252.3 216.4 259.4 222.9 267.0 C229.4 274.6 231.3 280.7 236.0 288.4 C240.7 296.1 244.6 302.3 249.0 309.6 C253.4 316.9 256.6 323.7 260.4 329.0 C264.2 334.3 264.9 333.7 270.2 339.0 C275.5 344.3 280.4 350.9 289.8 358.5 C299.2 366.1 312.4 374.3 322.4 381.4 C332.4 388.5 338.2 393.2 345.2 398.0 C352.2 402.8 356.0 404.0 361.5 407.8 C367.0 411.6 369.0 414.7 376.0 419.2 C383.0 423.7 393.8 429.5 400.5 433.0 C407.2 436.5 406.2 433.9 413.5 438.8 C420.8 443.7 431.6 452.9 441.3 460.0 C451.0 467.1 459.2 472.4 467.4 478.0 C475.6 483.6 480.0 484.8 487.0 491.0 C494.0 497.2 500.1 504.9 506.5 512.2 C512.9 519.5 516.9 525.0 522.8 531.8 C528.6 538.5 533.4 543.5 539.0 549.7 C544.6 555.9 550.0 561.5 553.8 566.0 C557.6 570.5 556.8 569.9 560.3 574.7 C563.8 579.5 569.0 585.9 573.4 592.6 C577.8 599.4 579.2 606.6 584.8 612.2 C590.4 617.8 598.5 619.8 604.4 623.6 C610.3 627.4 614.5 629.6 617.4 633.4 C620.3 637.2 617.2 641.3 620.7 644.8 C624.2 648.3 628.8 649.2 637.0 653.0 C645.2 656.8 660.8 663.7 666.0 666.0"/>
<path d="M377.9 60.0 C376.7 64.8 374.0 78.5 371.0 86.5 C368.0 94.5 367.3 98.2 361.5 104.4 C355.7 110.6 346.3 114.8 338.7 120.7 C331.1 126.6 326.6 130.5 319.0 137.0 C311.4 143.5 303.3 149.6 296.3 156.6 C289.3 163.6 283.8 168.9 280.0 176.0 C276.2 183.1 277.3 188.7 275.0 195.8 C272.7 202.9 269.6 209.5 267.0 215.3 C264.4 221.1 263.4 221.9 260.4 228.0 C257.4 234.1 254.1 241.1 250.6 249.0 C247.1 256.9 244.6 263.4 240.8 272.0 C237.0 280.6 232.5 288.6 229.4 296.5 C226.3 304.4 224.9 308.9 223.7 316.0 C222.5 323.1 223.2 328.1 222.9 335.7 C222.6 343.3 221.7 347.3 222.0 358.5 C222.3 369.7 223.2 388.0 224.5 398.0 C225.8 408.0 227.3 407.0 229.4 414.3 C231.5 421.6 233.9 431.5 236.0 438.8 C238.1 446.1 238.2 448.5 240.8 455.0 C243.4 461.5 247.7 467.9 250.6 474.7 C253.5 481.5 255.5 485.9 257.0 492.6 C258.5 499.3 258.8 504.1 258.8 512.0 C258.8 519.9 258.5 529.6 257.0 536.7 C255.5 543.8 252.9 545.7 250.6 551.3 C248.3 556.9 245.4 563.2 244.0 568.0 C242.6 572.8 243.0 574.4 243.0 578.0 C243.0 581.6 243.8 586.2 244.0 588.0"/>
<path d="M627.2 176.0 C625.4 179.0 619.6 186.6 617.4 192.5 C615.2 198.4 615.0 203.9 615.0 208.8 C615.0 213.8 617.6 216.5 617.4 220.0 C617.2 223.5 617.0 223.3 614.0 228.0 C611.0 232.7 605.7 240.7 601.0 246.0 C596.3 251.3 592.1 252.4 588.0 257.4 C583.9 262.4 582.1 268.1 578.3 273.7 C574.5 279.3 569.8 283.4 566.9 288.4 C564.0 293.4 563.2 295.8 562.0 301.4 C560.8 307.0 561.5 312.6 560.3 319.4 C559.1 326.2 556.1 333.7 555.4 339.0 C554.7 344.3 555.6 345.2 556.3 348.7 C557.0 352.2 558.9 352.0 559.5 358.5 C560.1 365.0 559.6 377.9 559.5 385.0 C559.4 392.1 558.6 392.1 558.7 398.0 C558.8 403.9 559.1 411.1 560.3 417.6 C561.5 424.1 564.0 427.4 565.2 433.9 C566.4 440.4 566.6 443.5 566.9 453.5 C567.2 463.5 567.2 479.4 566.9 489.4 C566.6 499.4 566.4 502.6 565.2 509.0 C564.0 515.4 561.5 520.8 560.3 525.2 C559.1 529.6 558.1 529.9 558.7 533.4 C559.3 536.9 563.0 541.0 563.6 544.8 C564.2 548.6 562.9 550.4 562.0 554.6 C561.1 558.8 559.0 564.3 558.7 568.0 C558.4 571.7 560.0 573.7 560.3 575.0"/>
<path d="M92.0 331.5 C95.3 333.1 104.1 338.8 110.3 340.6 C116.5 342.4 117.8 341.7 126.6 341.4 C135.4 341.1 147.5 339.7 159.3 339.0 C171.1 338.3 179.1 337.8 192.0 337.3 C204.9 336.9 224.0 336.6 231.0 336.5"/>
<path d="M100.5 81.6 C105.2 79.5 118.1 73.5 126.6 70.0 C135.1 66.5 144.0 63.4 147.8 62.0"/>
<path d="M353.0 60.0 C356.1 61.1 364.4 65.6 370.0 66.0 C375.6 66.4 381.5 62.7 384.0 62.0"/>
<path d="M630.5 62.0 C632.8 62.9 637.1 66.0 643.5 66.9 C649.9 67.8 662.0 66.9 666.0 66.9"/>
<path d="M92.0 404.5 C98.2 404.6 113.3 405.4 126.6 405.3 C139.9 405.2 155.8 403.7 165.8 403.7 C175.8 403.7 171.4 405.2 182.0 405.3 C192.6 405.4 206.9 404.3 224.5 404.2 C242.1 404.1 268.2 403.7 280.0 404.9 C291.8 406.1 285.1 407.6 289.8 411.0 C294.5 414.4 300.1 420.0 306.0 424.0 C311.9 428.0 315.9 429.8 322.4 433.0 C328.9 436.2 332.4 440.1 342.0 441.7 C351.6 443.3 365.5 441.9 376.0 441.7 C386.5 441.5 393.8 441.2 400.5 440.7 C407.2 440.2 407.3 437.9 413.5 438.8 C419.7 439.7 410.9 444.5 434.7 445.6 C458.5 446.7 524.0 444.7 545.7 445.0 C567.4 445.3 551.3 445.5 555.4 447.0 C559.5 448.5 564.1 451.4 568.5 453.5 C572.9 455.6 576.5 457.5 580.0 458.4 C583.5 459.3 583.6 459.6 588.0 458.7 C592.4 457.8 598.8 455.1 604.4 453.5 C610.0 451.9 614.9 450.0 619.0 450.0 C623.1 450.0 624.0 451.3 627.2 453.5 C630.4 455.7 633.5 461.2 637.0 462.4 C640.5 463.6 643.3 461.6 646.8 460.0 C650.3 458.4 653.1 456.0 656.6 453.5 C660.1 451.0 664.3 447.4 666.0 446.0"/>
<path d="M216.0 589.4 C234.9 589.4 292.0 588.8 320.8 589.4 C349.6 590.0 363.1 591.6 376.0 592.6 C388.9 593.6 386.4 593.8 392.3 595.0 C398.2 596.2 403.6 597.4 408.6 599.0 C413.6 600.6 408.2 602.9 420.0 603.7 C431.8 604.5 460.7 603.9 473.9 603.7 C487.1 603.5 487.0 603.7 493.5 602.4 C500.0 601.1 504.5 599.3 509.8 596.7 C515.1 594.1 518.4 590.5 522.8 587.7 C527.2 584.9 527.5 582.5 534.2 581.2 C541.0 579.9 550.6 580.4 560.3 580.4 C570.0 580.4 580.1 580.3 588.0 581.2 C595.9 582.1 596.3 584.7 604.4 585.3 C612.5 585.9 627.9 584.6 633.0 584.5"/>
<path d="M92.0 510.6 C94.1 511.3 98.1 513.6 103.8 514.6 C109.5 515.6 117.5 515.0 123.4 516.3 C129.3 517.6 131.7 519.8 136.4 522.0 C141.1 524.2 143.3 525.9 149.5 528.5 C155.7 531.1 160.4 534.9 170.7 536.7 C181.0 538.5 198.1 536.3 206.6 538.3 C215.1 540.3 213.3 543.9 218.0 548.0 C222.7 552.1 228.6 557.2 232.7 561.0 C236.8 564.8 238.8 564.1 240.8 569.0 C242.8 573.9 243.4 584.6 244.0 588.0"/>
<path d="M320.8 589.4 C323.4 592.0 329.2 597.5 335.4 604.0 C341.6 610.5 348.5 618.5 355.0 625.3 C361.5 632.1 367.5 638.1 371.3 641.6 C375.1 645.1 372.2 641.3 376.0 644.8 C379.8 648.3 386.4 655.4 392.3 661.0 C398.2 666.6 402.1 669.9 408.6 675.8 C415.1 681.7 421.1 687.3 428.2 693.8 C435.3 700.3 441.4 705.9 447.8 711.7 C454.2 717.5 458.1 722.0 464.0 726.0 C469.9 730.0 473.4 730.9 480.4 734.0 C487.4 737.1 485.4 740.8 503.0 743.0 C520.6 745.2 560.0 743.9 578.3 746.4 C596.6 748.9 595.0 752.8 604.4 757.0 C613.8 761.2 619.4 765.0 630.5 770.0 C641.6 775.0 659.6 781.9 666.0 784.5"/>
<path d="M637.0 462.4 C635.5 463.7 630.9 466.7 628.8 469.8 C626.7 472.9 625.3 474.9 625.6 479.6 C625.9 484.3 629.2 490.0 630.5 495.9 C631.8 501.8 632.5 500.7 633.0 512.2 C633.5 523.7 633.3 547.0 633.4 560.0 C633.5 573.0 633.9 574.2 633.8 584.5 C633.7 594.8 633.6 606.7 633.0 617.0 C632.4 627.3 631.3 632.8 630.5 641.6 C629.7 650.4 629.7 659.3 628.8 666.0 C627.9 672.7 628.5 673.7 625.6 679.0 C622.7 684.3 616.9 689.8 612.5 695.4 C608.1 701.0 605.7 704.5 601.0 710.0 C596.3 715.5 591.1 720.5 586.4 726.0 C581.7 731.5 579.1 735.4 575.0 740.7 C570.9 746.0 568.3 749.8 563.6 755.4 C558.9 761.0 553.4 766.4 549.0 771.7 C544.6 777.0 543.7 778.8 539.0 784.7 C534.3 790.6 528.9 797.2 522.8 804.3 C516.7 811.4 508.1 820.4 504.9 823.9"/>
<path d="M532.6 746.4 C534.4 748.9 538.3 755.2 542.4 760.3 C546.5 765.4 550.1 768.8 555.4 775.0 C560.7 781.2 566.5 788.9 571.8 794.5 C577.1 800.1 581.6 800.7 584.8 806.0 C588.0 811.3 587.4 818.9 589.7 823.9 C592.0 828.9 593.4 829.9 597.8 833.7 C602.2 837.5 608.4 841.2 614.0 845.0 C619.6 848.8 623.2 851.1 628.8 854.9 C634.4 858.7 640.6 862.2 645.0 866.3 C649.4 870.4 649.5 874.2 653.3 877.7 C657.1 881.2 663.7 884.5 666.0 886.0"/>
<path d="M666.0 725.0 C662.2 725.8 649.9 727.7 645.0 729.3 C640.1 730.9 639.8 733.2 638.6 734.0"/>
</g>
<g fill="none" stroke="#2a2c2e" stroke-width="4.8" stroke-linejoin="round" stroke-linecap="round" opacity=".75">
<path d="M196.0 587.5 L216.3 589.4"/>
<path d="M196.0 587.0 C197.0 588.0 199.5 588.9 201.7 592.6 C203.9 596.3 205.3 601.7 208.2 607.3 C211.1 612.9 215.4 618.0 218.0 623.6 C220.6 629.2 220.3 634.5 222.9 638.3 C225.5 642.1 228.3 641.6 232.7 644.8 C237.1 648.0 243.2 651.3 247.3 656.0 C251.4 660.7 252.0 666.0 255.5 671.0 C259.0 676.0 262.0 678.7 267.0 684.0 C272.0 689.3 277.6 694.4 283.2 700.3 C288.8 706.2 293.3 711.3 298.0 716.6 C302.7 721.9 304.7 724.2 309.3 730.0 C313.9 735.8 317.6 742.0 323.7 749.0 C329.8 756.0 335.7 761.9 343.4 769.0 C351.1 776.1 360.5 783.4 366.4 788.6 C372.3 793.8 370.5 793.5 376.0 797.8 C381.5 802.1 389.0 807.2 397.2 812.5 C405.4 817.8 413.8 822.0 421.7 827.0 C429.6 832.0 434.3 835.2 441.3 840.2 C448.3 845.2 454.9 851.2 460.8 854.9 C466.7 858.6 469.2 859.0 473.9 860.6 C478.6 862.2 484.6 863.2 487.0 863.8"/>
<path d="M487.0 863.8 C487.6 861.9 488.5 857.2 490.2 853.0 C491.9 848.8 495.2 844.0 496.7 840.2 C498.2 836.4 496.8 834.9 498.3 832.0 C499.8 829.1 503.7 825.4 504.9 823.9"/>
</g>
<g fill="none" stroke="#f8d970" stroke-width="3.1" stroke-linejoin="round" stroke-linecap="round">
<path d="M196.0 587.5 L216.3 589.4"/>
<path d="M196.0 587.0 C197.0 588.0 199.5 588.9 201.7 592.6 C203.9 596.3 205.3 601.7 208.2 607.3 C211.1 612.9 215.4 618.0 218.0 623.6 C220.6 629.2 220.3 634.5 222.9 638.3 C225.5 642.1 228.3 641.6 232.7 644.8 C237.1 648.0 243.2 651.3 247.3 656.0 C251.4 660.7 252.0 666.0 255.5 671.0 C259.0 676.0 262.0 678.7 267.0 684.0 C272.0 689.3 277.6 694.4 283.2 700.3 C288.8 706.2 293.3 711.3 298.0 716.6 C302.7 721.9 304.7 724.2 309.3 730.0 C313.9 735.8 317.6 742.0 323.7 749.0 C329.8 756.0 335.7 761.9 343.4 769.0 C351.1 776.1 360.5 783.4 366.4 788.6 C372.3 793.8 370.5 793.5 376.0 797.8 C381.5 802.1 389.0 807.2 397.2 812.5 C405.4 817.8 413.8 822.0 421.7 827.0 C429.6 832.0 434.3 835.2 441.3 840.2 C448.3 845.2 454.9 851.2 460.8 854.9 C466.7 858.6 469.2 859.0 473.9 860.6 C478.6 862.2 484.6 863.2 487.0 863.8"/>
<path d="M487.0 863.8 C487.6 861.9 488.5 857.2 490.2 853.0 C491.9 848.8 495.2 844.0 496.7 840.2 C498.2 836.4 496.8 834.9 498.3 832.0 C499.8 829.1 503.7 825.4 504.9 823.9"/>
</g>
<circle cx="377.2" cy="552" r="57" fill="#f58a2a" fill-opacity=".62" stroke="#f07c1e" stroke-width="1.4"/>
<circle cx="377.2" cy="552" r="27" fill="#e8341f" fill-opacity=".72" stroke="#e02a18" stroke-width="1.4"/>
<rect x="141.5" y="501" width="21" height="21" rx="5" fill="#fff" stroke="#1b1b1b" stroke-width="1.6"/>
<path d="M152 504 c1 0 1.3 1 1.3 2 v3.2 l6 3.6 v1.6 l-6 -1.8 v3.2 l1.8 1.4 v1.2 l-3.1 -.9 l-3.1 .9 v-1.2 l1.8 -1.4 v-3.2 l-6 1.8 v-1.6 l6 -3.6 v-3.2 c0 -1 .3 -2 1.3 -2 z" fill="#1b1b1b"/>
<g fill="#fff" stroke="#1d1d1b" stroke-width="3.2" stroke-linejoin="round" paint-order="stroke" font-size="22.6">
<text x="102.5" y="96.3" text-anchor="end" transform="translate(102.5 0) scale(.9 1) translate(-102.5 0)" font-size="34">Los Angeles</text>
<text x="409.0" y="66.0" textLength="125.5" lengthAdjust="spacingAndGlyphs">West Covina</text>
<text x="596.0" y="138.3" textLength="151.0" lengthAdjust="spacingAndGlyphs">Diamond Bar</text>
<text x="92.5" y="285.8" textLength="43.3" lengthAdjust="spacingAndGlyphs">Gate</text>
<text x="146.0" y="296.5" textLength="81.0" lengthAdjust="spacingAndGlyphs">Downey</text>
<text x="208.8" y="352.0" textLength="88.2" lengthAdjust="spacingAndGlyphs">Norwalk</text>
<text x="437.0" y="423.0" textLength="97.5" lengthAdjust="spacingAndGlyphs">Fullerton</text>
<text x="462.7" y="488.6" textLength="98.3" lengthAdjust="spacingAndGlyphs">Anaheim</text>
<text x="566.0" y="573.0" textLength="76.0" lengthAdjust="spacingAndGlyphs">Orange</text>
<text x="389.0" y="596.0" textLength="144.0" lengthAdjust="spacingAndGlyphs">Garden Grove</text>
<text x="512.6" y="642.0" textLength="113.9" lengthAdjust="spacingAndGlyphs">Santa Ana</text>
<text x="95.0" y="605.8" textLength="63.0" lengthAdjust="spacingAndGlyphs">Beach</text>
<text x="137.0" y="540.5" textLength="31.4" lengthAdjust="spacingAndGlyphs" font-size="15.5" font-weight="700" stroke-width="2.6">LGB</text>
<text x="322.0" y="756.4" textLength="117.0" lengthAdjust="spacingAndGlyphs">Huntington</text>
<text x="348.0" y="782.7" textLength="64.0" lengthAdjust="spacingAndGlyphs">Beach</text>
<text x="465.0" y="796.8" textLength="119.6" lengthAdjust="spacingAndGlyphs">Costa Mesa</text>
<text x="611.0" y="756.8" textLength="62.0" lengthAdjust="spacingAndGlyphs">Irvine</text>
<text x="405.8" y="879.8" textLength="160.8" lengthAdjust="spacingAndGlyphs">Newport Beach</text>
</g>
<path d="M94 62.8 H662" stroke="#2c3a52" stroke-width="1.6"/>
<path d="M94.8 62 V1042" stroke="#222c3c" stroke-width="1.8"/>
<path d="M660.9 62 V1042" stroke="#2c3a52" stroke-width="1.6"/>
<path d="M94 1041 H662" stroke="#2e3f66" stroke-width="2.4"/>
</svg>
</div>
<!-- SIDEBAR -->
<div id="sidebar">
  <svg style="left:32px;top:17px" width="30" height="30" viewBox="0 0 30 30">
    <defs><clipPath id="lt"><rect x="0" y="0" width="30" height="14.6"/></clipPath><clipPath id="lb"><rect x="0" y="14.6" width="30" height="16"/></clipPath></defs>
    <circle cx="15" cy="14.6" r="10.3" fill="none" stroke="#1b9bea" stroke-width="8.4" clip-path="url(#lt)"/>
    <circle cx="15" cy="14.6" r="10.3" fill="none" stroke="#5fc94b" stroke-width="8.4" clip-path="url(#lb)"/>
  </svg>
  <div class="div" style="top:62px"></div>
  <svg style="left:35px;top:83px" width="24" height="24" viewBox="0 0 24 24" fill="none" stroke="#fff" stroke-width="1.7" stroke-linecap="round"><circle cx="10.3" cy="10.2" r="6.5"/><path d="M15.2 15.2 L20.4 20.4"/></svg>
  <div class="div" style="top:124px"></div>

  <!-- Dashboard -->
  <svg style="left:37px;top:146px" width="20" height="14" viewBox="0 0 20 14" fill="none" stroke="#fff" stroke-width="1.4">
    <rect x="2.2" y="2.2" width="3.6" height="3.4" rx="1"/><rect x="8.2" y="2.2" width="3.6" height="3.4" rx="1"/><rect x="14.2" y="2.2" width="3.6" height="3.4" rx="1"/>
    <rect x="2.2" y="8.2" width="3.6" height="3.4" rx="1"/><rect x="8.2" y="8.2" width="3.6" height="3.4" rx="1"/><rect x="14.2" y="8.2" width="3.6" height="3.4" rx="1"/>
  </svg>
  <div class="nl" style="top:169.5px">Dashboard</div>
  <!-- Map -->
  <svg style="left:36px;top:199px" width="22" height="21" viewBox="0 0 22 21" fill="none" stroke="#fff" stroke-width="1.6" stroke-linejoin="round"><path d="M1.8 4.6 L8 2.4 L14 4.6 L20.2 2.4 V16.4 L14 18.6 L8 16.4 L1.8 18.6 Z M8 2.4 V16.4 M14 4.6 V18.6"/></svg>
  <div class="nl" style="top:226.5px">Map</div>
  <!-- Assets & Alerts -->
  <svg style="left:36px;top:255px" width="22" height="24" viewBox="0 0 22 24" fill="none" stroke="#fff" stroke-width="1.6" stroke-linejoin="round" stroke-linecap="round"><path d="M11 3.2 C7.4 3.2 5.6 6 5.6 9 V13 L3.8 16.6 H18.2 L16.4 13 V9 C16.4 6 14.6 3.2 11 3.2 Z M11 3.2 V2"/><path d="M9.2 19.6 a1.9 1.9 0 0 0 3.6 0" /></svg>
  <div class="nl" style="top:284px">Assets &amp;</div>
  <div class="nl" style="top:294.5px">Alerts</div>
  <!-- Events -->
  <svg style="left:36px;top:315px" width="22" height="24" viewBox="0 0 22 24" fill="none" stroke="#fff" stroke-width="1.6" stroke-linejoin="round"><rect x="3" y="4.4" width="16" height="16.2" rx="1.6"/><path d="M3 8.6 H19" stroke-width="3"/><path d="M7.2 2 V5 M14.8 2 V5" stroke-linecap="round"/></svg>
  <div class="nl" style="top:344px">Events</div>
  <!-- Admin -->
  <svg style="left:35px;top:372px" width="24" height="24" viewBox="0 0 24 24" fill="none" stroke="#fff" stroke-width="1.6" stroke-linejoin="round"><circle cx="12" cy="12" r="3.2"/><path d="M10.3 2.6 h3.4 l.5 2.4 1.9 .8 2.1 -1.4 2.4 2.4 -1.4 2.1 .8 1.9 2.4 .5 v3.4 l-2.4 .5 -.8 1.9 1.4 2.1 -2.4 2.4 -2.1 -1.4 -1.9 .8 -.5 2.4 h-3.4 l-.5 -2.4 -1.9 -.8 -2.1 1.4 -2.4 -2.4 1.4 -2.1 -.8 -1.9 -2.4 -.5 v-3.4 l2.4 -.5 .8 -1.9 -1.4 -2.1 2.4 -2.4 2.1 1.4 1.9 -.8 z"/></svg>
  <div class="nl" style="top:401px">Admin</div>
  <!-- User Management -->
  <svg style="left:34px;top:430px" width="26" height="23" viewBox="0 0 26 23"><g fill="#fff"><circle cx="6.6" cy="5" r="3.1"/><circle cx="19.4" cy="5" r="3.1"/><path d="M1.2 12.6 C1.2 9.6 3.6 8.6 6.6 8.6 C8 8.6 9 8.9 9.8 9.4 C8.6 10.2 8 11.4 7.8 12.6 Z"/><path d="M24.8 12.6 C24.8 9.6 22.4 8.6 19.4 8.6 C18 8.6 17 8.9 16.2 9.4 C17.4 10.2 18 11.4 18.2 12.6 Z"/></g><g fill="none" stroke="#fff" stroke-width="1.6"><circle cx="13" cy="10.4" r="3"/><path d="M6.4 20.6 C6.4 16.8 9.4 15.6 13 15.6 C16.6 15.6 19.6 16.8 19.6 20.6 Z" stroke-linejoin="round"/></g></svg>
  <div class="nl" style="top:458.5px">User</div>
  <div class="nl" style="top:469px">Management</div>

  <!-- bottom -->
  <svg style="left:37px;top:788px" width="20" height="20" viewBox="0 0 20 20" fill="none" stroke="#fff" stroke-width="1.6"><rect x="2.4" y="2.4" width="5.6" height="5.6" rx="1.2"/><rect x="12" y="2.4" width="5.6" height="5.6" rx="1.2"/><rect x="2.4" y="12" width="5.6" height="5.6" rx="1.2"/><rect x="12" y="12" width="5.6" height="5.6" rx="1.2"/></svg>
  <svg style="left:36px;top:831px" width="22" height="18" viewBox="0 0 22 18" fill="none" stroke="#fff" stroke-width="1.6" stroke-linejoin="round"><rect x="1.8" y="2" width="18.4" height="13.6" rx="2"/><path d="M2.2 4.2 L11 10.4 L19.8 4.2"/></svg>
  <svg style="left:36px;top:869px" width="22" height="24" viewBox="0 0 22 24" fill="none" stroke="#fff" stroke-width="1.6" stroke-linejoin="round" stroke-linecap="round"><path d="M11 4.2 C7.8 4.2 6 6.8 6 9.6 V13.4 L4.2 17 H17.8 L16 13.4 V9.6 C16 6.8 14.2 4.2 11 4.2 Z M11 4.2 V3"/><path d="M9.4 20 a1.7 1.7 0 0 0 3.2 0"/></svg>
  <div class="abs" style="left:54.5px;top:861.5px;width:11px;height:11px;border-radius:50%;background:#1f90ee"></div>
  <div class="div" style="top:917px"></div>
  <svg style="left:24px;top:925px" width="46" height="46" viewBox="0 0 46 46">
    <defs><clipPath id="av"><circle cx="22.9" cy="23.1" r="21.2"/></clipPath>
    <linearGradient id="avs" x1="0" y1="0" x2="0" y2="1"><stop offset="0" stop-color="#9db6d2"/><stop offset="1" stop-color="#54779f"/></linearGradient>
    <filter id="avb" x="-10%" y="-10%" width="120%" height="120%"><feGaussianBlur stdDeviation=".7"/></filter></defs>
    <g clip-path="url(#av)"><g filter="url(#avb)">
      <rect width="46" height="46" fill="#2a2226"/>
      <rect x="0" y="3" width="17.5" height="21" fill="#efa455"/>
      <rect x="11" y="5.5" width="6" height="9" fill="#fff1da"/><rect x="0" y="0" width="18" height="5" fill="#2a2226"/>
      <rect x="3" y="9" width="9" height="2.2" fill="#ffe2b0"/><rect x="3" y="13.5" width="10" height="2.2" fill="#ffe2b0"/>
      <rect x="0" y="23.5" width="18" height="22" fill="#6b6662"/>
      <rect x="2" y="20.5" width="12" height="4" fill="#3a3230"/>
      <rect x="35.4" y="4" width="11" height="36" fill="#e2531d"/>
      <rect x="41" y="4" width="5" height="36" fill="#b8350f"/>
      <ellipse cx="26" cy="15.5" rx="10.5" ry="12.5" fill="#17131a"/>
      <path d="M12 46 C12 33 15 28.5 22 27.4 L33 27 C39 28 42 32 43 46 Z" fill="url(#avs)"/>
      <path d="M18.2 14 C18.2 11 21 9.6 23.6 10.4 C25.6 12 26 17 25.2 21 L25.6 28.6 L20.4 28.2 L20.6 23.6 C18.4 22 17.6 17 18.2 14 Z" fill="#8b4b31"/>
      <ellipse cx="20.6" cy="15" rx="2" ry="1.6" fill="#b9bfd8" opacity=".7"/>
    </g></g>
    <circle cx="22.9" cy="23.1" r="21.6" fill="none" stroke="#fff" stroke-width="1.4"/>
  </svg>
  <div class="div" style="top:980px"></div>
  <svg style="left:36px;top:1001px" width="22" height="20" viewBox="0 0 22 20"><rect x="1.8" y="2.4" width="18.4" height="15.2" rx="2" fill="none" stroke="#fff" stroke-width="1.6"/><path d="M2 3 H8.6 V17 H2 Z" fill="#fff"/><path d="M3.6 6.2 H6.6 M3.6 9 H6.6 M3.6 11.8 H6.6" stroke="#2c3440" stroke-width="1.1"/></svg>
</div>
<!-- HEADER -->
<div id="header">
  <div class="bc" id="t_bc1" style="left:16.6px;letter-spacing:0.315px">Assets &amp; Alerts</div>
  <svg class="abs" style="left:146px;top:25px" width="10" height="14" viewBox="0 0 10 14"><path d="M2.5 2 L7.5 7 L2.5 12" fill="none" stroke="#8a8f9b" stroke-width="1.3"/></svg>
  <div class="bc" id="t_bc2" style="left:164.2px;letter-spacing:0.352px">Gillette Stadium</div>
  <svg class="abs" style="left:300px;top:25px" width="10" height="14" viewBox="0 0 10 14"><path d="M2.5 2 L7.5 7 L2.5 12" fill="none" stroke="#8a8f9b" stroke-width="1.3"/></svg>
  <div class="bc cur" id="t_bc3" style="left:318px;letter-spacing:0.066px">My Observation Alert</div>
  <div class="abs" style="left:1533px;top:0;width:1px;height:62px;background:#f7f7f8"></div>
  <div class="abs" style="left:1727px;top:0;width:1px;height:62px;background:#f7f7f8"></div>
  <div class="abs" style="left:1554px;top:0;height:62px;line-height:62px;font-size:16.4px;letter-spacing:0.296px;white-space:nowrap;color:#15171a" id="t_aa">Alert Active</div>
  <div class="abs" style="left:1651px;top:16px;width:56px;height:31px;border-radius:5px;background:#0b5fa9">
    <span class="abs" id="t_on" style="left:5.5px;top:0;line-height:31px;font-size:15px;color:#fff;letter-spacing:-1.016px">On</span>
    <span class="abs" style="left:30px;top:5px;width:21px;height:21px;border-radius:3px;background:#fff"></span>
  </div>
  <div class="abs" style="left:1748.6px;top:10.5px;width:137px;height:41.5px;border-radius:5px;background:#0877d5;color:#fff;font-weight:700;font-size:16.6px;line-height:41.5px;white-space:nowrap"><span id="t_save" class="abs" style="left:16px;top:0;letter-spacing:-0.517px">Save changes</span></div>
</div>

<!-- FORM -->
<div class="lbl" id="t_l1" style="left:682.6px;top:84px;letter-spacing:0.056px">Alert name</div>
<div class="inp" style="left:682.4px;top:109.5px;width:418.4px;height:41.5px"><span id="t_i1" style="letter-spacing:0.270px">My Observation Alert</span></div>
<div class="btn" style="left:1121.7px;top:109.5px;width:418.4px;height:41.5px">
  <svg class="abs" style="left:153px;top:10px" width="22" height="22" viewBox="0 0 22 22" fill="none" stroke="#101216" stroke-width="1.5"><circle cx="11" cy="6.6" r="3.6"/><path d="M3.5 19 C3.5 14.5 7 12.8 11 12.8 C15 12.8 18.5 14.5 18.5 19 Z" stroke-linejoin="round"/></svg>
  <span class="abs" id="t_rec" style="left:185px;top:0;line-height:40px;letter-spacing:-0.428px">Recipients</span>
</div>
<div class="btn" style="left:1561px;top:109.5px;width:418.4px;height:41.5px">
  <svg class="abs" style="left:116px;top:9px" width="26" height="24" viewBox="0 0 26 24" fill="none" stroke="#101216" stroke-width="1.5" stroke-linejoin="round"><path d="M2 3.5 h13.5 a1.2 1.2 0 0 1 1.2 1.2 v8 a1.2 1.2 0 0 1 -1.2 1.2 h-8.5 l-2.8 2.6 v-2.6 h-2.2 a1.2 1.2 0 0 1 -1.2 -1.2 v-8 a1.2 1.2 0 0 1 1.2 -1.2 z"/><path d="M19.5 8 h3.3 a1.2 1.2 0 0 1 1.2 1.2 v8 a1.2 1.2 0 0 1 -1.2 1.2 h-1.6 v2.6 l-2.8 -2.6 h-7.5 a1.2 1.2 0 0 1 -1.2 -1.2 v-0.8"/></svg>
  <span class="abs" id="t_msg" style="left:150.7px;top:0;line-height:40px;letter-spacing:-0.126px">Message templates</span>
</div>

<div class="lbl" id="t_l2" style="left:682.6px;top:172px;letter-spacing:-0.096px">Parameter</div>
<div class="inp" style="left:682.4px;top:198.4px;width:418.4px;height:41.5px"><span id="t_i2" style="letter-spacing:-0.050px">Wind Speed</span>
  <svg class="chev" style="left:388px;top:15px" width="17" height="11" viewBox="0 0 17 11"><path d="M1.2 1.5 L8.5 9 L15.8 1.5" fill="none" stroke="#15171a" stroke-width="1.6"/></svg></div>
<div class="lbl" id="t_l3" style="left:1122px;top:172px;letter-spacing:0.037px">Units</div>
<div class="inp" style="left:1121.7px;top:198.4px;width:418.4px;height:41.5px"><span id="t_i3" style="letter-spacing:0.071px">km/h</span>
  <svg class="chev" style="left:388px;top:15px" width="17" height="11" viewBox="0 0 17 11"><path d="M1.2 1.5 L8.5 9 L15.8 1.5" fill="none" stroke="#15171a" stroke-width="1.6"/></svg></div>
<div class="lbl" id="t_l4" style="left:1561px;top:172px;letter-spacing:0.057px">Weather station ID</div>
<div class="inp" style="left:1561px;top:198.4px;width:418.4px;height:41.5px"><span id="t_i4" style="letter-spacing:0.189px">12345678912345678910</span></div>

<!-- TABLE -->
<div id="tbl">
  <div class="th">
    <div class="h" id="t_h1" style="left:10px;top:12px;letter-spacing:-0.494px">Level</div>
    <div class="h" id="t_h2" style="left:334px;top:12px;letter-spacing:-0.073px">Parameter</div>
    <div class="h" id="t_h3" style="left:1171.5px;top:12px;letter-spacing:-0.346px">Actions</div>
  </div>
  <div class="r1">
    <div class="sw" style="left:20px;top:24px;background:#e0230f"></div>
    <div class="inp" style="left:51.5px;top:13.5px;width:262px;height:41.5px"><span id="t_sev" style="color:#333;letter-spacing:-0.240px">Severe</span></div>
    <div class="t ws" style="left:334px;top:24.5px;letter-spacing:0.105px">Wind Speed</div>
    <div class="inp" style="left:442px;top:13.5px;width:227px;height:41.5px"><span class="gt" style="letter-spacing:0.197px">greater than or equal to</span>
      <svg class="chev" style="left:197px;top:16px" width="17" height="11" viewBox="0 0 17 11"><path d="M1.2 1.5 L8.5 9 L15.8 1.5" fill="none" stroke="#15171a" stroke-width="1.6"/></svg></div>
    <div class="inp" style="left:679px;top:13.5px;width:50px;height:41.5px;border-color:#d9dde5"><span id="t_225a" style="color:#444;letter-spacing:0.115px">225</span></div>
    <div class="t kmh" style="left:739.4px;top:24.5px;letter-spacing:0.371px">km/h</div>
    <div class="ib" style="left:1171px;top:19px"><svg width="28" height="28" viewBox="0 0 28 28" fill="none" stroke="#101216" stroke-width="1.3"><circle cx="14" cy="10.6" r="2.6"/><path d="M8.6 19.6 C8.6 16.3 11 15.2 14 15.2 C17 15.2 19.4 16.3 19.4 19.6 Z" stroke-linejoin="round"/></svg></div>
    <div class="ib" style="left:1212.5px;top:19px"><svg width="28" height="28" viewBox="0 0 28 28" fill="none" stroke="#101216" stroke-width="1.3" stroke-linejoin="round"><path d="M9 8.2 h10.6 a0.8 0.8 0 0 1 .8 .8 v7.6 a0.8 .8 0 0 1 -.8 .8 h-5.6 l-2.6 2.4 v-2.4 h-2.4 a.8 .8 0 0 1 -.8 -.8 v-7.6 a.8 .8 0 0 1 .8 -.8 z"/></svg></div>
    <div class="ib" style="left:1254px;top:19px"><svg width="28" height="28" viewBox="0 0 28 28" fill="none" stroke="#101216" stroke-width="1.3" stroke-linejoin="round"><path d="M8.6 10 h11.2 M11.8 10 v-1.2 a1 1 0 0 1 1 -1 h2.8 a1 1 0 0 1 1 1 v1.2 M10 10 l.8 9.4 a1 1 0 0 0 1 .9 h4.8 a1 1 0 0 0 1 -.9 l.8 -9.4"/></svg></div>
  </div>
  <div class="r2">
    <div class="sw" style="left:20px;top:24px;background:#ee7320"></div>
    <div class="t" id="t_mod" style="left:62px;top:24px;font-size:16.3px;color:#333;letter-spacing:0.287px">Moderate</div>
    <div class="t ws" style="left:334px;top:24.5px;letter-spacing:0.105px">Wind Speed</div>
    <div class="inp" style="left:442px;top:13.5px;width:227px;height:41.5px"><span class="gt" style="letter-spacing:0.197px">greater than or equal to</span>
      <svg class="chev" style="left:197px;top:16px" width="17" height="11" viewBox="0 0 17 11"><path d="M1.2 1.5 L8.5 9 L15.8 1.5" fill="none" stroke="#15171a" stroke-width="1.6"/></svg></div>
    <div class="t" id="t_225b" style="left:690px;top:24px;font-size:16.3px;color:#444;letter-spacing:0.115px">225</div>
    <div class="t kmh" style="left:739.4px;top:24.5px;letter-spacing:0.371px">km/h</div>
    <div class="ib" style="left:1171px;top:19px"><svg width="28" height="28" viewBox="0 0 28 28" fill="none" stroke="#101216" stroke-width="1.3"><circle cx="14" cy="10.6" r="2.6"/><path d="M8.6 19.6 C8.6 16.3 11 15.2 14 15.2 C17 15.2 19.4 16.3 19.4 19.6 Z" stroke-linejoin="round"/></svg></div>
    <div class="ib" style="left:1212.5px;top:19px"><svg width="28" height="28" viewBox="0 0 28 28" fill="none" stroke="#101216" stroke-width="1.3" stroke-linejoin="round"><path d="M9 8.2 h10.6 a0.8 0.8 0 0 1 .8 .8 v7.6 a0.8 .8 0 0 1 -.8 .8 h-5.6 l-2.6 2.4 v-2.4 h-2.4 a.8 .8 0 0 1 -.8 -.8 v-7.6 a.8 .8 0 0 1 .8 -.8 z"/></svg></div>
    <div class="ib" style="left:1254px;top:19px"><svg width="28" height="28" viewBox="0 0 28 28" fill="none" stroke="#101216" stroke-width="1.3" stroke-linejoin="round"><path d="M8.6 10 h11.2 M11.8 10 v-1.2 a1 1 0 0 1 1 -1 h2.8 a1 1 0 0 1 1 1 v1.2 M10 10 l.8 9.4 a1 1 0 0 0 1 .9 h4.8 a1 1 0 0 0 1 -.9 l.8 -9.4"/></svg></div>
  </div>
  <div class="tf">
    <svg class="abs" style="left:525px;top:11.2px" width="22" height="22" viewBox="0 0 22 22" fill="none" stroke="#101216" stroke-width="1.5"><circle cx="11" cy="11" r="8.6"/><path d="M11 7 V15 M7 11 H15"/></svg>
    <div class="h" id="t_add" style="left:557.5px;top:13px;font-size:16.6px;letter-spacing:-0.432px">Add alert level</div>
  </div>
</div>
<!-- cursor -->
<svg class="abs" style="left:1390.5px;top:351px" width="22" height="26" viewBox="0 0 22 26"><path d="M6.2 3.2 c0 -1.6 2.6 -1.6 2.6 0 v7 l.3 -2.4 c.3 -1.3 2.4 -1.1 2.4 .3 l.2 2 c.3 -1.3 2.3 -1.1 2.4 .3 l.1 1.5 c.4 -1.1 2.2 -.9 2.2 .4 v4.5 c0 2.2 -.8 3.3 -1.4 5.2 h-7.6 c-.8 -2.2 -3 -4.6 -4.6 -7 c-.8 -1.3 .9 -2.3 1.9 -1.3 l1.5 1.7 z" fill="#fff" stroke="#111" stroke-width="1.2" stroke-linejoin="round"/><path d="M10.2 16 v4 M12.4 16 v4 M14.6 16 v4" stroke="#111" stroke-width="1"/></svg>
</body>
</html>
